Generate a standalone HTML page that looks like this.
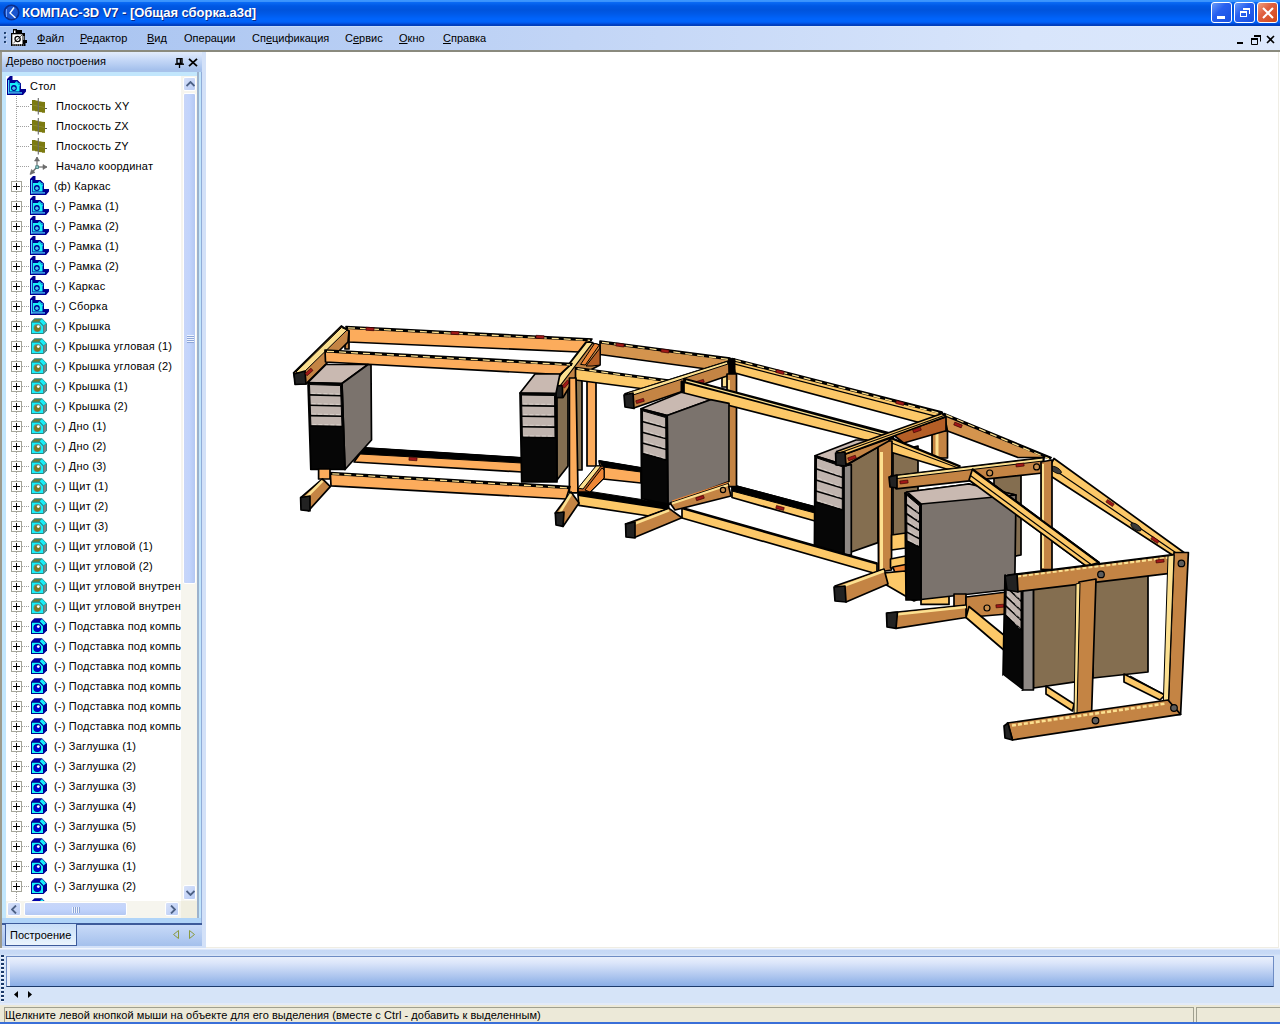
<!DOCTYPE html>
<html><head><meta charset="utf-8">
<style>
*{margin:0;padding:0;box-sizing:border-box}
html,body{width:1280px;height:1024px;overflow:hidden;background:#fff;font-family:"Liberation Sans",sans-serif;font-size:11px;color:#000}
.abs{position:absolute}
#title{left:0;top:0;width:1280px;height:26px;background:linear-gradient(#3c98ff 0px,#3a92fc 1.5px,#0a6af4 2.5px,#0058e4 6px,#0054dc 10px,#005ae8 14px,#0064fc 19px,#0062f8 22px,#0050e0 23.5px,#003cb8 25px,#0040c0 26px)}
#title .t{left:22px;top:5px;color:#fff;font-weight:bold;font-size:13px;letter-spacing:-0.05px;text-shadow:1px 1px 0 #0a2a8a}
.wb{top:2px;width:21px;height:21px;border:1px solid #fff;border-radius:3px;background:linear-gradient(135deg,#6a9cf8,#2860f0 40%,#1850e0)}
.wb.c{background:linear-gradient(135deg,#f0a080,#e06040 40%,#d04818)}
#menu{left:0;top:26px;width:1280px;height:24px;background:linear-gradient(90deg,#a6c2f0 0%,#c2d5f6 45%,#d8e5fb 80%,#dce8fc 100%)}
#menu span{position:absolute;top:6px;font-size:11px}
#sep{left:0;top:50px;width:1280px;height:2px;background:#8a8a7e}
#lp{left:0;top:52px;width:206px;height:896px;background:#d3e1f8}
#lpb{left:0;top:52px;width:2px;height:896px;background:#9c9a8c}
#ph{left:2px;top:52px;width:200px;height:18px;background:linear-gradient(#e2ecfc,#c8daf8 40%,#a4c0ec)}
#ph .t{left:4px;top:3px}
#phb{left:2px;top:70px;width:200px;height:2px;background:#a8c2ea}
#treeb{left:2px;top:72px;width:199px;height:852px;background:#c2e6fc}
#tree{left:6px;top:76px;width:175px;height:825px;background:#fff;overflow:hidden}
.row{position:absolute;left:0;height:20px;white-space:nowrap}
.tx{white-space:nowrap;letter-spacing:0.2px}
.dotv{position:absolute;border-left:1px dotted #a0a0a0}
.doth{position:absolute;border-top:1px dotted #a0a0a0}
.pb{position:absolute;width:11px;height:11px;border:1px solid #a5a59a;background:#fff}
.pb:before{content:"";position:absolute;left:1px;top:4px;width:7px;height:1px;background:#000}
.pb:after{content:"";position:absolute;left:4px;top:1px;width:1px;height:7px;background:#000}
#vs{left:181px;top:76px;width:16px;height:825px;background:#f6f5ee}
.sbtn{position:absolute;border:1px solid #fff;border-radius:2px;background:linear-gradient(135deg,#d8e2fa,#b8cbf4)}
#hs{left:6px;top:901px;width:191px;height:17px;background:#f6f5ee}
#tabbar{left:2px;top:924px;width:200px;height:22px;background:linear-gradient(#c8daf8,#a4c0ec);border-top:1px solid #3c5a9a}
#tab{left:5px;top:924px;width:72px;height:22px;background:linear-gradient(#c8def8,#eaf4fc);border:1px solid #3c5a9a;border-top:none}
#bot{left:0;top:948px;width:1280px;height:59px;background:#d6e4f8}
#status{left:0;top:1005px;width:1280px;height:17px;background:#ece9d8}
#taskb{left:0;top:1022px;width:1280px;height:2px;background:#3a6fd8}
</style></head><body>
<div id="title" class="abs">
  <svg class="abs" style="left:2px;top:3px" width="18" height="18" viewBox="0 0 18 18"><circle cx="9.5" cy="9.5" r="7.3" fill="#1a56d0" stroke="#0c2e8a" stroke-width="1.6"/><path d="M12 4.5 L8 10 L13.5 15" stroke="#f0f8ff" stroke-width="1.4" fill="none"/><path d="M4.5 6 L4.5 14" stroke="#6aa0ff" stroke-width="1"/></svg>
  <div class="abs t">КОМПАС-3D V7 - [Общая сборка.a3d]</div>
  <div class="abs wb" style="left:1211px"><div class="abs" style="left:5px;top:13px;width:8px;height:3px;background:#fff"></div></div>
  <div class="abs wb" style="left:1234px"><div class="abs" style="left:5px;top:8px;width:7px;height:6px;border:1px solid #fff;border-top-width:2px"></div><div class="abs" style="left:8px;top:5px;width:7px;height:6px;border-top:2px solid #fff;border-right:1px solid #fff"></div></div>
  <div class="abs wb c" style="left:1257px"><svg class="abs" style="left:3px;top:3px" width="14" height="14"><path d="M2 2L12 12M12 2L2 12" stroke="#fff" stroke-width="2"/></svg></div>
</div>
<div id="menu" class="abs">
  <svg class="abs" style="left:3px;top:5px" width="5" height="14"><rect x="1" y="1" width="2" height="2" fill="#1c3c6c"/><rect x="1" y="5.5" width="2" height="2" fill="#1c3c6c"/><rect x="1" y="10" width="2" height="2" fill="#1c3c6c"/><path d="M3.2 2.5v1.2M3.2 7v1.2M3.2 11.5v1.2" stroke="#fff" stroke-width="0.8"/></svg>
  <svg class="abs" style="left:10px;top:2px" width="18" height="19" viewBox="0 0 18 19"><path d="M1 5 L3 5 L3 1 L7 1 L7 2 L12 2 L12 5 L15 5 L15 12 L17 12 L17 15 L15.5 15 L15.5 18 L1 18 Z" fill="#000"/><rect x="2.3" y="6.3" width="10.2" height="9.8" fill="#fff"/><rect x="4" y="2.5" width="1.5" height="2.5" fill="#fff"/><circle cx="7.6" cy="11" r="2.6" fill="none" stroke="#000" stroke-width="1.3"/><path d="M3.5 15 L12.5 6.5" stroke="#000" stroke-width="0.7"/><rect x="13" y="8" width="1.4" height="4" fill="#888"/><path d="M2.5 17 H13.5" stroke="#fff" stroke-width="1.1" stroke-dasharray="1.1 1"/></svg>
  <span style="left:37px"><u>Ф</u>айл</span>
  <span style="left:80px"><u>Р</u>едактор</span>
  <span style="left:147px"><u>В</u>ид</span>
  <span style="left:184px">Операции</span>
  <span style="left:252px">Сп<u>е</u>цификация</span>
  <span style="left:345px">С<u>е</u>рвис</span>
  <span style="left:399px"><u>О</u>кно</span>
  <span style="left:443px"><u>С</u>правка</span>
  <div class="abs" style="left:1237px;top:16px;width:6px;height:2px;background:#000"></div>
  <svg class="abs" style="left:1251px;top:9px" width="10" height="10"><path d="M0.5 3.5h6v6h-6z M3.5 0.5h6v6" fill="none" stroke="#000"/><path d="M0 3h7v2H0z M3 0h7v2H3z" fill="#000"/></svg>
  <svg class="abs" style="left:1266px;top:9px" width="10" height="10"><path d="M1 1L8 8M8 1L1 8" stroke="#000" stroke-width="1.6"/></svg>
</div>
<div id="sep" class="abs"></div>
<div class="abs" style="left:0;top:26px;width:1280px;height:1px;background:linear-gradient(90deg,#b8d4fa,#d4e6fc 60%,#e4eefc)"></div>
<svg class="abs" style="left:0;top:0" width="1280" height="1024" viewBox="0 0 1280 1024"><polygon points="346.0,326.5 592.0,339.0 579.0,352.0 348.0,342.0" fill="#fcac5c" stroke="#000" stroke-width="1.7" stroke-linejoin="round"/>
<line x1="346.0" y1="327.8" x2="592.0" y2="340.3" stroke="#000" stroke-width="2.6" stroke-linecap="butt"/>
<line x1="348.0" y1="327.8" x2="590.0" y2="340.3" stroke="#fce090" stroke-width="1.3" stroke-linecap="butt" stroke-dasharray="7 5"/>
<polygon points="600.0,341.0 730.0,358.0 736.0,373.0 600.0,354.5" fill="#d4944e" stroke="#000" stroke-width="1.7" stroke-linejoin="round"/>
<line x1="600.0" y1="342.3" x2="730.0" y2="359.3" stroke="#000" stroke-width="2.6" stroke-linecap="butt"/>
<line x1="602.0" y1="342.3" x2="728.0" y2="359.3" stroke="#fce090" stroke-width="1.3" stroke-linecap="butt" stroke-dasharray="7 5"/>
<polygon points="732.0,358.5 942.0,412.0 947.0,430.0 735.0,373.0" fill="#fcc868" stroke="#000" stroke-width="1.7" stroke-linejoin="round"/>
<line x1="732.0" y1="359.8" x2="942.0" y2="413.3" stroke="#000" stroke-width="2.6" stroke-linecap="butt"/>
<line x1="734.0" y1="359.8" x2="940.0" y2="413.3" stroke="#fce090" stroke-width="1.3" stroke-linecap="butt" stroke-dasharray="7 5"/>
<line x1="733.0" y1="363.6" x2="943.8" y2="418.3" stroke="#000" stroke-width="1.2" stroke-linecap="butt"/>
<polygon points="944.0,413.5 1051.0,457.5 1018.0,457.5 947.5,431.0" fill="#d4944e" stroke="#000" stroke-width="1.7" stroke-linejoin="round"/>
<line x1="944.0" y1="414.8" x2="1051.0" y2="458.8" stroke="#000" stroke-width="2.6" stroke-linecap="butt"/>
<line x1="946.0" y1="414.8" x2="1049.0" y2="458.8" stroke="#fce090" stroke-width="1.3" stroke-linecap="butt" stroke-dasharray="7 5"/>
<polygon points="1054.0,458.5 1184.0,552.5 1174.0,556.0 1046.0,473.0" fill="#fcc868" stroke="#000" stroke-width="1.7" stroke-linejoin="round"/>
<line x1="1049.6" y1="466.5" x2="1178.5" y2="554.4" stroke="#000" stroke-width="1.2" stroke-linecap="butt"/>
<rect x="366" y="327.5" width="8" height="3" fill="#a01818" stroke="#300" stroke-width="0.6" transform="rotate(3 370 329)"/>
<rect x="451" y="331.5" width="8" height="3" fill="#a01818" stroke="#300" stroke-width="0.6" transform="rotate(3 455 333)"/>
<rect x="536" y="335.5" width="8" height="3" fill="#a01818" stroke="#300" stroke-width="0.6" transform="rotate(3 540 337)"/>
<rect x="616" y="343.5" width="8" height="3" fill="#a01818" stroke="#300" stroke-width="0.6" transform="rotate(8 620 345)"/>
<rect x="661" y="349.5" width="8" height="3" fill="#a01818" stroke="#300" stroke-width="0.6" transform="rotate(8 665 351)"/>
<rect x="776" y="370.5" width="8" height="3" fill="#a01818" stroke="#300" stroke-width="0.6" transform="rotate(15 780 372)"/>
<rect x="896" y="401.5" width="8" height="3" fill="#a01818" stroke="#300" stroke-width="0.6" transform="rotate(15 900 403)"/>
<rect x="954" y="423.5" width="8" height="3" fill="#a01818" stroke="#300" stroke-width="0.6" transform="rotate(22 958 425)"/>
<rect x="1106" y="501.5" width="8" height="3" fill="#a01818" stroke="#300" stroke-width="0.6" transform="rotate(35 1110 503)"/>
<rect x="1151" y="538.5" width="8" height="3" fill="#a01818" stroke="#300" stroke-width="0.6" transform="rotate(35 1155 540)"/>
<ellipse cx="1056" cy="470" rx="6" ry="2.6" fill="#3a3a3a" stroke="#000" stroke-width="0.8" transform="rotate(30 1056 470)"/>
<ellipse cx="1136" cy="527" rx="6" ry="2.6" fill="#3a3a3a" stroke="#000" stroke-width="0.8" transform="rotate(34 1136 527)"/>
<ellipse cx="1010" cy="497" rx="6" ry="2.6" fill="#3a3a3a" stroke="#000" stroke-width="0.8" transform="rotate(8 1010 497)"/>
<polygon points="364.0,448.0 522.0,458.0 522.0,472.0 354.0,462.0" fill="#fcac5c" stroke="#000" stroke-width="1.7" stroke-linejoin="round"/>
<polygon points="364.0,447.5 522.0,457.5 522.0,463.0 360.0,454.0" fill="#000" stroke="#000" stroke-width="1" stroke-linejoin="round"/>
<rect x="409" y="457.5" width="8" height="3" fill="#a01818" stroke="#300" stroke-width="0.6" transform="rotate(4 413 459)"/>
<polygon points="599.0,461.0 641.0,468.0 641.0,483.0 603.0,479.0" fill="#fcac5c" stroke="#000" stroke-width="1.7" stroke-linejoin="round"/>
<polygon points="599.0,460.5 641.0,467.5 641.0,472.0 603.0,467.0" fill="#000" stroke="#000" stroke-width="1" stroke-linejoin="round"/>
<polygon points="732.0,485.0 815.0,507.0 815.0,521.0 732.0,497.5" fill="#fcc868" stroke="#000" stroke-width="1.7" stroke-linejoin="round"/>
<polygon points="732.0,484.5 815.0,506.5 815.0,513.0 732.0,491.0" fill="#000" stroke="#000" stroke-width="1" stroke-linejoin="round"/>
<rect x="776" y="506.5" width="8" height="3" fill="#a01818" stroke="#300" stroke-width="0.6" transform="rotate(15 780 508)"/>
<polygon points="557.0,388.0 568.0,383.0 568.0,466.0 557.0,480.0" fill="#846e50" stroke="#000" stroke-width="1.7" stroke-linejoin="round"/>
<polygon points="576.0,378.0 582.0,378.0 582.0,470.0 576.0,470.0" fill="#8a7450" stroke="#000" stroke-width="1.7" stroke-linejoin="round"/>
<polygon points="846.0,465.5 878.0,447.0 878.0,542.6 851.3,552.0" fill="#846e50" stroke="#000" stroke-width="1.7" stroke-linejoin="round"/>
<polygon points="843.8,466.0 851.3,464.7 851.3,555.0 843.8,555.0" fill="#8e8884" stroke="#000" stroke-width="1.7" stroke-linejoin="round"/>
<polygon points="893.0,452.0 918.0,446.0 918.0,535.0 893.0,540.0" fill="#846e50" stroke="#000" stroke-width="1.7" stroke-linejoin="round"/>
<polygon points="994.0,478.0 1021.0,472.0 1021.0,555.0 994.0,560.0" fill="#846e50" stroke="#000" stroke-width="1.7" stroke-linejoin="round"/>
<polygon points="1033.4,589.0 1077.0,582.0 1077.0,681.6 1033.4,688.0" fill="#846e50" stroke="#000" stroke-width="1.7" stroke-linejoin="round"/>
<polygon points="1022.5,590.0 1033.4,589.0 1033.4,690.0 1022.5,690.0" fill="#8e8884" stroke="#000" stroke-width="1.7" stroke-linejoin="round"/>
<polygon points="1093.0,578.0 1148.0,570.0 1148.0,672.0 1093.0,678.0" fill="#846e50" stroke="#000" stroke-width="1.7" stroke-linejoin="round"/>
<polygon points="345.0,331.0 349.0,331.0 349.0,349.0 345.0,349.0" fill="#c48444" stroke="#000" stroke-width="1.7" stroke-linejoin="round"/>
<polygon points="587.0,380.0 596.0,380.0 596.0,466.0 587.0,466.0" fill="#fcac5c" stroke="#000" stroke-width="1.7" stroke-linejoin="round"/>
<polygon points="722.0,366.6 729.0,366.6 729.0,387.0 722.0,387.0" fill="#fce090" stroke="#000" stroke-width="1.7" stroke-linejoin="round"/>
<polygon points="932.0,431.0 947.5,431.0 947.5,458.0 932.0,458.0" fill="#c48444" stroke="#000" stroke-width="1.7" stroke-linejoin="round"/>
<line x1="937.0" y1="432.0" x2="937.0" y2="457.0" stroke="#fce090" stroke-width="3" stroke-linecap="butt"/>
<polygon points="293.6,372.8 341.3,326.0 349.0,331.0 348.0,342.0 306.0,383.8 296.0,384.0" fill="#c48444" stroke="#000" stroke-width="1.7" stroke-linejoin="round"/>
<polygon points="296.0,372.0 341.5,327.5 347.0,330.0 301.0,375.0" fill="#fce090" stroke="#000" stroke-width="1" stroke-linejoin="round"/>
<polygon points="294.0,374.0 305.0,371.0 306.0,384.0 295.0,384.5" fill="#222" stroke="#000" stroke-width="1.7" stroke-linejoin="round"/>
<rect x="305" y="370.5" width="8" height="3" fill="#a01818" stroke="#300" stroke-width="0.6" transform="rotate(-42 309 372)"/>
<polygon points="552.0,386.0 586.0,342.0 600.0,345.0 600.0,365.0 575.0,378.0 563.0,397.5 553.0,397.5" fill="#c48444" stroke="#000" stroke-width="1.7" stroke-linejoin="round"/>
<polygon points="553.0,385.0 586.5,342.3 593.0,342.3 560.0,386.0" fill="#fce090" stroke="#000" stroke-width="1.2" stroke-linejoin="round"/>
<polygon points="580.6,364.4 594.7,343.3 599.4,344.8 585.3,365.0" fill="#ee8636" stroke="#000" stroke-width="1" stroke-linejoin="round"/>
<polygon points="586.0,366.0 600.0,348.0 600.0,365.0 592.0,366.0" fill="#b45e26" stroke="#000" stroke-width="1" stroke-linejoin="round"/>
<polygon points="552.0,386.0 562.5,385.5 562.5,397.5 553.0,397.5" fill="#222" stroke="#000" stroke-width="1.7" stroke-linejoin="round"/>
<rect x="544" y="386.5" width="8" height="3" fill="#a01818" stroke="#300" stroke-width="0.6" transform="rotate(-50 548 388)"/>
<rect x="562" y="382.5" width="8" height="3" fill="#a01818" stroke="#300" stroke-width="0.6" transform="rotate(-50 566 384)"/>
<polygon points="325.0,350.0 572.0,363.5 560.0,374.5 325.5,362.0" fill="#fcac5c" stroke="#000" stroke-width="1.7" stroke-linejoin="round"/>
<line x1="325.0" y1="351.3" x2="572.0" y2="364.8" stroke="#000" stroke-width="2.6" stroke-linecap="butt"/>
<line x1="327.0" y1="351.3" x2="570.0" y2="364.8" stroke="#fce090" stroke-width="1.3" stroke-linecap="butt" stroke-dasharray="7 5"/>
<polygon points="575.5,367.5 683.0,382.0 683.0,394.0 575.5,380.0" fill="#fcc868" stroke="#000" stroke-width="1.7" stroke-linejoin="round"/>
<line x1="575.5" y1="368.6" x2="683.0" y2="383.1" stroke="#000" stroke-width="2.2" stroke-linecap="butt"/>
<line x1="577.5" y1="368.6" x2="681.0" y2="383.1" stroke="#fce090" stroke-width="1.3" stroke-linecap="butt" stroke-dasharray="7 5"/>
<polygon points="625.0,393.8 728.8,361.0 730.0,375.0 633.8,408.0" fill="#c48444" stroke="#000" stroke-width="1.7" stroke-linejoin="round"/>
<polygon points="627.0,393.0 727.0,361.5 728.0,364.0 630.0,396.0" fill="#fce090" stroke="#000" stroke-width="1" stroke-linejoin="round"/>
<polygon points="624.0,395.0 633.0,393.0 634.0,408.5 625.0,407.0" fill="#222" stroke="#000" stroke-width="1.7" stroke-linejoin="round"/>
<rect x="636" y="399.5" width="8" height="3" fill="#a01818" stroke="#300" stroke-width="0.6" transform="rotate(-17 640 401)"/>
<rect x="696" y="380.5" width="8" height="3" fill="#a01818" stroke="#300" stroke-width="0.6" transform="rotate(-17 700 382)"/>
<polygon points="681.0,381.0 686.0,381.0 686.0,392.5 681.0,392.5" fill="#000" stroke="#000" stroke-width="1" stroke-linejoin="round"/>
<polygon points="728.8,358.8 735.0,358.8 735.0,374.4 728.8,374.4" fill="#000" stroke="#000" stroke-width="1" stroke-linejoin="round"/>
<polygon points="727.0,374.0 736.5,374.0 736.5,486.6 727.0,486.6" fill="#c48444" stroke="#000" stroke-width="1.7" stroke-linejoin="round"/>
<line x1="729.0" y1="380.0" x2="729.0" y2="484.0" stroke="#fce090" stroke-width="2" stroke-linecap="butt"/>
<polygon points="684.0,378.5 889.0,432.8 885.0,445.0 684.0,394.0" fill="#fcc868" stroke="#000" stroke-width="1.7" stroke-linejoin="round"/>
<line x1="684.0" y1="380.8" x2="889.0" y2="435.1" stroke="#000" stroke-width="4.5" stroke-linecap="butt"/>
<line x1="686.0" y1="380.8" x2="887.0" y2="435.1" stroke="#fce090" stroke-width="1.2" stroke-linecap="butt"/>
<polygon points="887.0,436.0 960.0,466.0 953.0,471.0 887.0,451.0" fill="#fcc868" stroke="#000" stroke-width="1.7" stroke-linejoin="round"/>
<line x1="887.0" y1="436.8" x2="960.0" y2="466.8" stroke="#000" stroke-width="1.5" stroke-linecap="butt"/>
<line x1="887.0" y1="441.2" x2="957.5" y2="467.8" stroke="#000" stroke-width="1.2" stroke-linecap="butt"/>
<polygon points="308.0,382.5 326.0,364.5 368.0,364.5 342.0,383.5" fill="#c9b9b1" stroke="#000" stroke-width="1.7" stroke-linejoin="round"/>
<polygon points="342.0,383.5 368.0,364.5 371.0,365.0 371.5,440.0 345.0,469.5" fill="#7b736d" stroke="#000" stroke-width="1.7" stroke-linejoin="round"/>
<polygon points="308.0,382.5 342.0,383.5 345.0,469.5 310.8,469.5" fill="#060606" stroke="#000" stroke-width="1.7" stroke-linejoin="round"/>
<polygon points="309.5,384.5 340.5,385.5 342.0,426.5 310.9,426.0" fill="#c0b4ae" stroke="#000" stroke-width="1" stroke-linejoin="round"/>
<line x1="309.4" y1="394.9" x2="341.4" y2="395.8" stroke="#000" stroke-width="1.6" stroke-linecap="butt"/>
<line x1="311.4" y1="393.3" x2="339.4" y2="394.1" stroke="#e8e2dc" stroke-width="0.6" stroke-linecap="butt" stroke-dasharray="4 2"/>
<line x1="309.7" y1="405.2" x2="341.8" y2="406.0" stroke="#000" stroke-width="1.6" stroke-linecap="butt"/>
<line x1="311.7" y1="403.6" x2="339.8" y2="404.4" stroke="#e8e2dc" stroke-width="0.6" stroke-linecap="butt" stroke-dasharray="4 2"/>
<line x1="310.0" y1="415.6" x2="342.1" y2="416.2" stroke="#000" stroke-width="1.6" stroke-linecap="butt"/>
<line x1="312.0" y1="414.0" x2="340.1" y2="414.6" stroke="#e8e2dc" stroke-width="0.6" stroke-linecap="butt" stroke-dasharray="4 2"/>
<line x1="310.4" y1="426.0" x2="342.5" y2="426.5" stroke="#000" stroke-width="1.6" stroke-linecap="butt"/>
<line x1="312.4" y1="424.4" x2="340.5" y2="424.9" stroke="#e8e2dc" stroke-width="0.6" stroke-linecap="butt" stroke-dasharray="4 2"/>
<polygon points="520.0,393.0 535.0,374.0 560.0,374.0 556.0,393.5" fill="#c9b9b1" stroke="#000" stroke-width="1.7" stroke-linejoin="round"/>
<polygon points="520.0,393.0 556.0,393.5 557.0,481.9 521.7,481.9" fill="#060606" stroke="#000" stroke-width="1.7" stroke-linejoin="round"/>
<polygon points="521.5,395.0 554.5,395.5 555.0,437.7 522.4,437.4" fill="#c0b4ae" stroke="#000" stroke-width="1" stroke-linejoin="round"/>
<line x1="521.2" y1="405.6" x2="555.1" y2="406.1" stroke="#000" stroke-width="1.6" stroke-linecap="butt"/>
<line x1="523.2" y1="404.0" x2="553.1" y2="404.4" stroke="#e8e2dc" stroke-width="0.6" stroke-linecap="butt" stroke-dasharray="4 2"/>
<line x1="521.4" y1="416.2" x2="555.2" y2="416.6" stroke="#000" stroke-width="1.6" stroke-linecap="butt"/>
<line x1="523.4" y1="414.6" x2="553.2" y2="415.0" stroke="#e8e2dc" stroke-width="0.6" stroke-linecap="butt" stroke-dasharray="4 2"/>
<line x1="521.6" y1="426.8" x2="555.4" y2="427.1" stroke="#000" stroke-width="1.6" stroke-linecap="butt"/>
<line x1="523.6" y1="425.2" x2="553.4" y2="425.5" stroke="#e8e2dc" stroke-width="0.6" stroke-linecap="butt" stroke-dasharray="4 2"/>
<line x1="521.9" y1="437.4" x2="555.5" y2="437.7" stroke="#000" stroke-width="1.6" stroke-linecap="butt"/>
<line x1="523.9" y1="435.8" x2="553.5" y2="436.1" stroke="#e8e2dc" stroke-width="0.6" stroke-linecap="butt" stroke-dasharray="4 2"/>
<polygon points="641.0,408.8 681.3,392.3 710.6,399.7 667.2,415.5" fill="#c9b9b1" stroke="#000" stroke-width="1.7" stroke-linejoin="round"/>
<polygon points="667.2,415.5 710.6,399.7 729.0,403.3 729.0,481.5 667.9,504.7" fill="#7b736d" stroke="#000" stroke-width="1.7" stroke-linejoin="round"/>
<polygon points="641.0,408.8 667.2,415.5 667.9,504.7 641.6,498.5" fill="#060606" stroke="#000" stroke-width="1.7" stroke-linejoin="round"/>
<polygon points="642.5,410.8 665.7,417.5 666.0,460.1 642.8,453.6" fill="#c0b4ae" stroke="#000" stroke-width="1" stroke-linejoin="round"/>
<line x1="642.1" y1="421.5" x2="666.3" y2="428.1" stroke="#000" stroke-width="1.6" stroke-linecap="butt"/>
<line x1="644.1" y1="419.9" x2="664.3" y2="426.5" stroke="#e8e2dc" stroke-width="0.6" stroke-linecap="butt" stroke-dasharray="4 2"/>
<line x1="642.1" y1="432.2" x2="666.4" y2="438.8" stroke="#000" stroke-width="1.6" stroke-linecap="butt"/>
<line x1="644.1" y1="430.6" x2="664.4" y2="437.2" stroke="#e8e2dc" stroke-width="0.6" stroke-linecap="butt" stroke-dasharray="4 2"/>
<line x1="642.2" y1="442.9" x2="666.5" y2="449.5" stroke="#000" stroke-width="1.6" stroke-linecap="butt"/>
<line x1="644.2" y1="441.3" x2="664.5" y2="447.9" stroke="#e8e2dc" stroke-width="0.6" stroke-linecap="butt" stroke-dasharray="4 2"/>
<line x1="642.3" y1="453.6" x2="666.5" y2="460.1" stroke="#000" stroke-width="1.6" stroke-linecap="butt"/>
<line x1="644.3" y1="452.0" x2="664.5" y2="458.5" stroke="#e8e2dc" stroke-width="0.6" stroke-linecap="butt" stroke-dasharray="4 2"/>
<polygon points="815.0,455.8 856.0,440.0 867.0,440.0 843.8,464.7" fill="#c9b9b1" stroke="#000" stroke-width="1.7" stroke-linejoin="round"/>
<polygon points="815.0,455.8 843.8,464.7 843.8,555.0 814.4,548.0" fill="#060606" stroke="#000" stroke-width="1.7" stroke-linejoin="round"/>
<polygon points="816.5,457.8 842.3,466.7 842.3,509.9 816.2,501.9" fill="#c0b4ae" stroke="#000" stroke-width="1" stroke-linejoin="round"/>
<line x1="815.9" y1="468.8" x2="842.8" y2="477.5" stroke="#000" stroke-width="1.6" stroke-linecap="butt"/>
<line x1="817.9" y1="467.2" x2="840.8" y2="475.9" stroke="#e8e2dc" stroke-width="0.6" stroke-linecap="butt" stroke-dasharray="4 2"/>
<line x1="815.9" y1="479.9" x2="842.8" y2="488.3" stroke="#000" stroke-width="1.6" stroke-linecap="butt"/>
<line x1="817.9" y1="478.2" x2="840.8" y2="486.7" stroke="#e8e2dc" stroke-width="0.6" stroke-linecap="butt" stroke-dasharray="4 2"/>
<line x1="815.8" y1="490.9" x2="842.8" y2="499.1" stroke="#000" stroke-width="1.6" stroke-linecap="butt"/>
<line x1="817.8" y1="489.3" x2="840.8" y2="497.5" stroke="#e8e2dc" stroke-width="0.6" stroke-linecap="butt" stroke-dasharray="4 2"/>
<line x1="815.7" y1="501.9" x2="842.8" y2="509.9" stroke="#000" stroke-width="1.6" stroke-linecap="butt"/>
<line x1="817.7" y1="500.3" x2="840.8" y2="508.2" stroke="#e8e2dc" stroke-width="0.6" stroke-linecap="butt" stroke-dasharray="4 2"/>
<polygon points="878.0,441.0 892.0,441.0 891.5,570.0 878.5,572.0" fill="#c48444" stroke="#000" stroke-width="1.7" stroke-linejoin="round"/>
<line x1="881.5" y1="452.0" x2="881.5" y2="569.0" stroke="#fce090" stroke-width="3" stroke-linecap="butt"/>
<polygon points="893.5,435.0 946.0,417.0 946.0,430.8 903.7,443.0" fill="#b45e26" stroke="#000" stroke-width="1.7" stroke-linejoin="round"/>
<polygon points="840.0,456.0 893.5,437.0 888.0,441.5 846.7,464.5" fill="#c48444" stroke="#000" stroke-width="1.7" stroke-linejoin="round"/>
<polygon points="836.6,451.5 942.0,413.5 946.0,416.5 840.0,456.0" fill="#fcc868" stroke="#000" stroke-width="1.7" stroke-linejoin="round"/>
<line x1="838.0" y1="453.5" x2="944.0" y2="415.5" stroke="#000" stroke-width="1.2" stroke-linecap="butt"/>
<polygon points="835.6,453.0 845.0,452.0 846.0,466.0 836.0,465.0" fill="#222" stroke="#000" stroke-width="1.7" stroke-linejoin="round"/>
<rect x="848" y="456.5" width="8" height="3" fill="#a01818" stroke="#300" stroke-width="0.6" transform="rotate(-19 852 458)"/>
<rect x="913" y="428.5" width="8" height="3" fill="#a01818" stroke="#300" stroke-width="0.6" transform="rotate(-19 917 430)"/>
<polygon points="569.4,378.0 576.0,378.0 578.0,492.8 569.4,492.8" fill="#fcac5c" stroke="#000" stroke-width="1.7" stroke-linejoin="round"/>
<polygon points="330.3,472.5 570.0,486.6 566.0,499.0 331.0,485.8" fill="#fcac5c" stroke="#000" stroke-width="1.7" stroke-linejoin="round"/>
<line x1="330.3" y1="473.8" x2="570.0" y2="487.9" stroke="#000" stroke-width="2.6" stroke-linecap="butt"/>
<line x1="332.3" y1="473.8" x2="568.0" y2="487.9" stroke="#fce090" stroke-width="1.3" stroke-linecap="butt" stroke-dasharray="7 5"/>
<polygon points="578.8,489.7 669.0,503.8 669.0,508.4 578.0,494.4" fill="#000" stroke="#000" stroke-width="1" stroke-linejoin="round"/>
<polygon points="578.0,494.4 669.0,508.4 649.0,516.0 578.8,505.3" fill="#fcc868" stroke="#000" stroke-width="1.7" stroke-linejoin="round"/>
<line x1="578.0" y1="495.2" x2="669.0" y2="509.2" stroke="#000" stroke-width="1.6" stroke-linecap="butt"/>
<polygon points="682.0,507.6 877.0,563.0 877.0,574.0 682.0,518.0" fill="#fcc868" stroke="#000" stroke-width="1.7" stroke-linejoin="round"/>
<line x1="682.0" y1="508.5" x2="877.0" y2="563.9" stroke="#000" stroke-width="1.8" stroke-linecap="butt"/>
<polygon points="578.0,489.0 597.0,466.0 604.0,466.0 604.0,478.0 590.0,492.0 578.0,492.0" fill="#b45e26" stroke="#000" stroke-width="1.7" stroke-linejoin="round"/>
<polygon points="578.0,488.0 596.0,466.0 601.0,466.0 583.0,489.0" fill="#fce090" stroke="#000" stroke-width="1" stroke-linejoin="round"/>
<polygon points="585.0,490.0 602.0,468.0 604.0,470.0 604.0,478.0 590.0,492.0" fill="#ee8636" stroke="#000" stroke-width="1" stroke-linejoin="round"/>
<polygon points="670.0,503.0 728.0,483.6 731.0,496.0 675.0,510.0" fill="#c48444" stroke="#000" stroke-width="1.7" stroke-linejoin="round"/>
<line x1="672.0" y1="503.5" x2="728.0" y2="485.0" stroke="#fce090" stroke-width="2.2" stroke-linecap="butt"/>
<line x1="672.0" y1="501.0" x2="728.0" y2="482.5" stroke="#ee8636" stroke-width="1.2" stroke-linecap="butt"/>
<circle cx="723" cy="490" r="2.6" fill="#c89050" stroke="#000" stroke-width="1.2"/>
<rect x="696" y="496.5" width="8" height="3" fill="#a01818" stroke="#300" stroke-width="0.6" transform="rotate(-18 700 498)"/>
<polygon points="972.5,469.0 1099.0,562.4 1087.0,566.6 969.0,480.0" fill="#fcc868" stroke="#000" stroke-width="1.7" stroke-linejoin="round"/>
<line x1="972.5" y1="469.8" x2="1099.0" y2="563.1" stroke="#000" stroke-width="1.5" stroke-linecap="butt"/>
<line x1="970.4" y1="475.6" x2="1091.8" y2="564.9" stroke="#000" stroke-width="1.2" stroke-linecap="butt"/>
<polygon points="891.0,476.0 1044.0,457.5 1042.8,473.0 896.0,488.8" fill="#c48444" stroke="#000" stroke-width="1.7" stroke-linejoin="round"/>
<polygon points="892.0,476.0 1043.0,458.0 1043.0,461.0 893.0,479.0" fill="#fce090" stroke="#000" stroke-width="1" stroke-linejoin="round"/>
<polygon points="889.0,477.0 897.0,475.0 897.0,488.0 890.0,487.0" fill="#222" stroke="#000" stroke-width="1.7" stroke-linejoin="round"/>
<rect x="900" y="480.5" width="8" height="3" fill="#a01818" stroke="#300" stroke-width="0.6" transform="rotate(-7 904 482)"/>
<rect x="1016" y="463.5" width="8" height="3" fill="#a01818" stroke="#300" stroke-width="0.6" transform="rotate(-7 1020 465)"/>
<circle cx="989.7" cy="473" r="3" fill="#c89050" stroke="#000" stroke-width="1.2"/>
<circle cx="1036.6" cy="466.9" r="3" fill="#c89050" stroke="#000" stroke-width="1.2"/>
<polygon points="1041.0,462.0 1052.0,460.0 1052.0,569.7 1041.0,569.7" fill="#c48444" stroke="#000" stroke-width="1.7" stroke-linejoin="round"/>
<line x1="1043.0" y1="464.0" x2="1043.0" y2="568.0" stroke="#fce090" stroke-width="2" stroke-linecap="butt"/>
<polygon points="891.6,535.0 905.7,533.0 905.7,548.0 891.6,550.0" fill="#fcc868" stroke="#000" stroke-width="1.7" stroke-linejoin="round"/>
<polygon points="890.5,559.0 905.7,556.0 905.7,567.0 890.5,568.0" fill="#fcc868" stroke="#000" stroke-width="1.7" stroke-linejoin="round"/>
<polygon points="892.8,567.0 905.7,564.5 905.7,575.0 897.0,578.0" fill="#ee8636" stroke="#000" stroke-width="1.7" stroke-linejoin="round"/>
<polygon points="884.6,572.8 905.0,571.0 922.0,597.4 914.0,601.0 883.4,583.3" fill="#fcc868" stroke="#000" stroke-width="1.7" stroke-linejoin="round"/>
<polygon points="921.0,597.0 949.0,595.0 949.0,604.4 921.0,604.4" fill="#fcc868" stroke="#000" stroke-width="1.7" stroke-linejoin="round"/>
<polygon points="905.0,493.0 907.0,492.0 969.0,484.0 921.0,504.0" fill="#c9b9b1" stroke="#000" stroke-width="1.7" stroke-linejoin="round"/>
<polygon points="921.0,504.0 969.0,484.0 1016.0,495.0 1014.7,589.0 921.0,599.5" fill="#7b736d" stroke="#000" stroke-width="1.7" stroke-linejoin="round"/>
<polygon points="905.0,493.0 921.0,504.0 921.0,600.0 906.0,600.0" fill="#060606" stroke="#000" stroke-width="1.7" stroke-linejoin="round"/>
<polygon points="906.5,495.0 919.5,506.0 919.5,547.2 907.0,541.1" fill="#c0b4ae" stroke="#000" stroke-width="1" stroke-linejoin="round"/>
<line x1="906.1" y1="504.2" x2="920.0" y2="514.2" stroke="#000" stroke-width="1.6" stroke-linecap="butt"/>
<line x1="908.1" y1="502.6" x2="918.0" y2="512.6" stroke="#e8e2dc" stroke-width="0.6" stroke-linecap="butt" stroke-dasharray="4 2"/>
<line x1="906.2" y1="513.5" x2="920.0" y2="522.5" stroke="#000" stroke-width="1.6" stroke-linecap="butt"/>
<line x1="908.2" y1="511.9" x2="918.0" y2="520.9" stroke="#e8e2dc" stroke-width="0.6" stroke-linecap="butt" stroke-dasharray="4 2"/>
<line x1="906.3" y1="522.7" x2="920.0" y2="530.7" stroke="#000" stroke-width="1.6" stroke-linecap="butt"/>
<line x1="908.3" y1="521.1" x2="918.0" y2="529.1" stroke="#e8e2dc" stroke-width="0.6" stroke-linecap="butt" stroke-dasharray="4 2"/>
<line x1="906.4" y1="531.9" x2="920.0" y2="539.0" stroke="#000" stroke-width="1.6" stroke-linecap="butt"/>
<line x1="908.4" y1="530.3" x2="918.0" y2="537.4" stroke="#e8e2dc" stroke-width="0.6" stroke-linecap="butt" stroke-dasharray="4 2"/>
<line x1="906.5" y1="541.1" x2="920.0" y2="547.2" stroke="#000" stroke-width="1.6" stroke-linecap="butt"/>
<line x1="908.5" y1="539.5" x2="918.0" y2="545.6" stroke="#e8e2dc" stroke-width="0.6" stroke-linecap="butt" stroke-dasharray="4 2"/>
<polygon points="907.0,492.0 969.0,484.0 1016.0,495.0 921.0,504.0" fill="#c9b9b1" stroke="#000" stroke-width="1.7" stroke-linejoin="round"/>
<polygon points="972.5,469.0 1099.0,562.4 1087.0,566.6 969.0,480.0" fill="#fcc868" stroke="#000" stroke-width="1.7" stroke-linejoin="round"/>
<line x1="972.5" y1="469.8" x2="1099.0" y2="563.1" stroke="#000" stroke-width="1.5" stroke-linecap="butt"/>
<line x1="970.4" y1="475.6" x2="1091.8" y2="564.9" stroke="#000" stroke-width="1.2" stroke-linecap="butt"/>
<polygon points="318.6,469.0 330.0,469.0 330.0,479.0 318.6,479.0" fill="#fcac5c" stroke="#000" stroke-width="1.7" stroke-linejoin="round"/>
<polygon points="301.0,497.5 322.5,478.8 330.3,486.6 308.4,510.8" fill="#c48444" stroke="#000" stroke-width="1.7" stroke-linejoin="round"/>
<line x1="304.0" y1="499.5" x2="322.5" y2="480.8" stroke="#fce090" stroke-width="2.6" stroke-linecap="butt"/>
<polygon points="300.6,497.5 310.0,496.0 310.0,510.8 301.0,510.0" fill="#222" stroke="#000" stroke-width="1.7" stroke-linejoin="round"/>
<polygon points="555.3,513.0 571.0,492.0 579.0,503.0 563.0,526.4" fill="#c48444" stroke="#000" stroke-width="1.7" stroke-linejoin="round"/>
<line x1="558.3" y1="515.0" x2="571.0" y2="494.0" stroke="#fce090" stroke-width="2.6" stroke-linecap="butt"/>
<polygon points="555.3,513.0 564.0,512.0 563.0,526.4 556.0,525.0" fill="#222" stroke="#000" stroke-width="1.7" stroke-linejoin="round"/>
<polygon points="625.6,524.0 669.0,508.4 681.9,517.8 635.0,537.3" fill="#c48444" stroke="#000" stroke-width="1.7" stroke-linejoin="round"/>
<line x1="628.6" y1="526.0" x2="669.0" y2="510.4" stroke="#fce090" stroke-width="2.6" stroke-linecap="butt"/>
<polygon points="625.6,524.0 635.0,522.0 635.0,538.0 626.0,537.0" fill="#222" stroke="#000" stroke-width="1.7" stroke-linejoin="round"/>
<polygon points="835.0,586.0 884.0,569.0 888.0,584.0 846.0,602.0" fill="#c48444" stroke="#000" stroke-width="1.7" stroke-linejoin="round"/>
<line x1="838.0" y1="588.0" x2="884.0" y2="571.0" stroke="#fce090" stroke-width="2.6" stroke-linecap="butt"/>
<polygon points="834.0,587.0 845.0,586.0 846.0,602.0 835.0,601.0" fill="#222" stroke="#000" stroke-width="1.7" stroke-linejoin="round"/>
<polygon points="954.0,594.0 966.0,594.0 966.0,606.5 954.0,606.5" fill="#c48444" stroke="#000" stroke-width="1.7" stroke-linejoin="round"/>
<polygon points="966.0,597.0 1007.0,592.0 1007.0,614.0 966.0,617.5" fill="#c48444" stroke="#000" stroke-width="1.7" stroke-linejoin="round"/>
<circle cx="987" cy="608" r="3" fill="#c89050" stroke="#000" stroke-width="1.2"/>
<rect x="996" y="604.5" width="8" height="3" fill="#a01818" stroke="#300" stroke-width="0.6" transform="rotate(-5 1000 606)"/>
<polygon points="969.0,606.5 1005.0,636.0 1003.8,650.0 966.0,617.5" fill="#fcc868" stroke="#000" stroke-width="1.7" stroke-linejoin="round"/>
<polygon points="888.0,613.0 966.0,605.0 966.0,617.5 896.0,628.4" fill="#c48444" stroke="#000" stroke-width="1.7" stroke-linejoin="round"/>
<line x1="891.0" y1="615.0" x2="966.0" y2="607.0" stroke="#fce090" stroke-width="2.6" stroke-linecap="butt"/>
<polygon points="886.5,613.0 897.5,612.0 896.0,628.4 887.0,627.0" fill="#222" stroke="#000" stroke-width="1.7" stroke-linejoin="round"/>
<polygon points="1005.0,575.0 1022.5,590.0 1022.5,690.0 1003.0,675.0" fill="#060606" stroke="#000" stroke-width="1.7" stroke-linejoin="round"/>
<polygon points="1006.5,577.0 1021.0,592.0 1021.0,630.0 1005.7,615.0" fill="#c0b4ae" stroke="#000" stroke-width="1" stroke-linejoin="round"/>
<line x1="1005.8" y1="586.5" x2="1021.5" y2="601.5" stroke="#000" stroke-width="1.6" stroke-linecap="butt"/>
<line x1="1007.8" y1="584.9" x2="1019.5" y2="599.9" stroke="#e8e2dc" stroke-width="0.6" stroke-linecap="butt" stroke-dasharray="4 2"/>
<line x1="1005.6" y1="596.0" x2="1021.5" y2="611.0" stroke="#000" stroke-width="1.6" stroke-linecap="butt"/>
<line x1="1007.6" y1="594.4" x2="1019.5" y2="609.4" stroke="#e8e2dc" stroke-width="0.6" stroke-linecap="butt" stroke-dasharray="4 2"/>
<line x1="1005.4" y1="605.5" x2="1021.5" y2="620.5" stroke="#000" stroke-width="1.6" stroke-linecap="butt"/>
<line x1="1007.4" y1="603.9" x2="1019.5" y2="618.9" stroke="#e8e2dc" stroke-width="0.6" stroke-linecap="butt" stroke-dasharray="4 2"/>
<line x1="1005.2" y1="615.0" x2="1021.5" y2="630.0" stroke="#000" stroke-width="1.6" stroke-linecap="butt"/>
<line x1="1007.2" y1="613.4" x2="1019.5" y2="628.4" stroke="#e8e2dc" stroke-width="0.6" stroke-linecap="butt" stroke-dasharray="4 2"/>
<polygon points="1003.0,675.0 1022.5,690.0 1022.5,690.0 1003.0,690.0" fill="#fff" stroke="#fff" stroke-width="0" stroke-linejoin="round"/>
<polygon points="1046.0,686.0 1074.0,704.0 1072.5,711.0 1046.0,694.0" fill="#fcc868" stroke="#000" stroke-width="1.7" stroke-linejoin="round"/>
<polygon points="1124.0,674.0 1165.0,695.0 1160.0,700.0 1124.0,682.0" fill="#fcc868" stroke="#000" stroke-width="1.7" stroke-linejoin="round"/>
<line x1="1130.0" y1="676.0" x2="1163.0" y2="694.0" stroke="#000" stroke-width="1.2" stroke-linecap="butt"/>
<polygon points="1008.0,575.0 1177.0,554.0 1174.0,572.8 1017.5,591.6" fill="#c48444" stroke="#000" stroke-width="1.7" stroke-linejoin="round"/>
<line x1="1011.0" y1="577.0" x2="1175.0" y2="556.5" stroke="#fce090" stroke-width="2.6" stroke-linecap="butt" stroke-dasharray="4 2"/>
<line x1="1011.0" y1="575.5" x2="1175.0" y2="555.0" stroke="#000" stroke-width="1.2" stroke-linecap="butt"/>
<polygon points="1005.0,576.0 1017.0,574.0 1018.0,592.0 1007.0,590.0" fill="#222" stroke="#000" stroke-width="1.7" stroke-linejoin="round"/>
<rect x="1156" y="559.5" width="8" height="3" fill="#a01818" stroke="#300" stroke-width="0.6" transform="rotate(-7 1160 561)"/>
<polygon points="1079.0,582.0 1096.0,579.0 1091.5,716.0 1076.0,716.0" fill="#c48444" stroke="#000" stroke-width="1.7" stroke-linejoin="round"/>
<polygon points="1076.0,584.0 1080.0,583.0 1077.0,714.0 1074.0,714.0" fill="#fce090" stroke="#000" stroke-width="1" stroke-linejoin="round"/>
<polygon points="1174.0,552.5 1188.4,552.5 1180.6,714.4 1168.0,714.4" fill="#c48444" stroke="#000" stroke-width="1.7" stroke-linejoin="round"/>
<polygon points="1168.0,556.0 1174.0,555.0 1168.0,712.0 1163.0,712.0" fill="#fce090" stroke="#000" stroke-width="1" stroke-linejoin="round"/>
<polygon points="1007.5,723.0 1168.0,700.0 1180.6,714.4 1012.5,740.0" fill="#c48444" stroke="#000" stroke-width="1.7" stroke-linejoin="round"/>
<line x1="1012.0" y1="725.5" x2="1166.0" y2="703.5" stroke="#fce090" stroke-width="2.6" stroke-linecap="butt" stroke-dasharray="4 2"/>
<polygon points="1004.0,726.0 1008.0,723.0 1012.5,740.0 1005.0,738.0" fill="#222" stroke="#000" stroke-width="1.7" stroke-linejoin="round"/>
<circle cx="1101" cy="574.4" r="3.3" fill="#5c5c5c" stroke="#000" stroke-width="1.2"/>
<circle cx="1181.4" cy="563.4" r="3.3" fill="#5c5c5c" stroke="#000" stroke-width="1.2"/>
<circle cx="1174" cy="708" r="3.3" fill="#5c5c5c" stroke="#000" stroke-width="1.2"/>
<circle cx="1095.5" cy="720.6" r="3.3" fill="#5c5c5c" stroke="#000" stroke-width="1.2"/></svg>
<div id="lp" class="abs"></div>
<div id="lpb" class="abs"></div>
<div id="ph" class="abs"><div class="abs t">Дерево построения</div>
<svg class="abs" style="left:173px;top:6px" width="9" height="10"><path d="M2 0.5h5v5H2z" fill="none" stroke="#000" stroke-width="1.4"/><path d="M5.5 0.5v5" stroke="#000" stroke-width="1.5"/><path d="M0 6.2h9" stroke="#000" stroke-width="1.4"/><path d="M4.5 6v4" stroke="#000" stroke-width="1.3"/></svg>
<svg class="abs" style="left:186px;top:6px" width="10" height="9"><path d="M1 0.8L9 8.2M9 0.8L1 8.2" stroke="#000" stroke-width="1.8"/></svg></div>
<div id="phb" class="abs"></div>
<div id="treeb" class="abs"></div>
<div id="tree" class="abs">
<div class="dotv" style="left:10px;top:20px;height:809px"></div>
<svg class="abs" style="left:1px;top:0px" width="20" height="19" viewBox="0 0 20 19">
<path d="M0 3 L3 0 L5.5 0 L5.5 4 L10.5 4 L14 7.5 L14 13 L19 13 L19 15.5 L16 19 L0 19Z" fill="#000090"/>
<rect x="1" y="4" width="1.3" height="13.5" fill="#50d8ff"/><rect x="1" y="16.3" width="14" height="1.2" fill="#50d8ff"/>
<path d="M3 7 L12.5 7 L12.5 15.5 L3 15.5Z" fill="#18f0f8"/>
<path d="M9.5 5 L13.5 9 L12 10.5 L8 6.5Z" fill="#18f0f8"/>
<path d="M9 5.5 L13 9.5" stroke="#000090" stroke-width="0.9" stroke-dasharray="1 0.8"/>
<circle cx="6.9" cy="12" r="2.9" fill="#000090"/><circle cx="6.9" cy="12.3" r="1.7" fill="#40c8f0"/>
</svg>
<div class="abs tx" style="left:24px;top:4px">Стол</div>
<div class="doth" style="left:11px;top:30px;width:12px"></div>
<svg class="abs" style="left:24px;top:22px" width="17" height="17" viewBox="0 0 17 17">
<path d="M2 2 L5.5 2 L5.5 2.6 L8.3 2.8 L8.3 3.3 L11.5 3.4 L11.5 3.8 L15 3.9 L15 14.7 L12 14.7 L12 14.2 L8.3 14 L8.3 13.4 L5 13.2 L5 12.7 L2 12.7Z" fill="#7c7a10"/>
<path d="M2.5 7 L14.5 9.5" stroke="#a0a060" stroke-width="0.6" opacity="0.7"/>
<path d="M8.3 0 L8.3 16.6" stroke="#6a6a6a" stroke-width="1.1"/>
<path d="M0 6.5 L2 6.5 M15 10.5 L17 10.5" stroke="#5a5a5a" stroke-width="1.1"/>
</svg>
<div class="abs tx" style="left:50px;top:24px">Плоскость XY</div>
<div class="doth" style="left:11px;top:50px;width:12px"></div>
<svg class="abs" style="left:24px;top:42px" width="17" height="17" viewBox="0 0 17 17">
<path d="M2 2 L5.5 2 L5.5 2.6 L8.3 2.8 L8.3 3.3 L11.5 3.4 L11.5 3.8 L15 3.9 L15 14.7 L12 14.7 L12 14.2 L8.3 14 L8.3 13.4 L5 13.2 L5 12.7 L2 12.7Z" fill="#7c7a10"/>
<path d="M2.5 7 L14.5 9.5" stroke="#a0a060" stroke-width="0.6" opacity="0.7"/>
<path d="M8.3 0 L8.3 16.6" stroke="#6a6a6a" stroke-width="1.1"/>
<path d="M0 6.5 L2 6.5 M15 10.5 L17 10.5" stroke="#5a5a5a" stroke-width="1.1"/>
</svg>
<div class="abs tx" style="left:50px;top:44px">Плоскость ZX</div>
<div class="doth" style="left:11px;top:70px;width:12px"></div>
<svg class="abs" style="left:24px;top:62px" width="17" height="17" viewBox="0 0 17 17">
<path d="M2 2 L5.5 2 L5.5 2.6 L8.3 2.8 L8.3 3.3 L11.5 3.4 L11.5 3.8 L15 3.9 L15 14.7 L12 14.7 L12 14.2 L8.3 14 L8.3 13.4 L5 13.2 L5 12.7 L2 12.7Z" fill="#7c7a10"/>
<path d="M2.5 7 L14.5 9.5" stroke="#a0a060" stroke-width="0.6" opacity="0.7"/>
<path d="M8.3 0 L8.3 16.6" stroke="#6a6a6a" stroke-width="1.1"/>
<path d="M0 6.5 L2 6.5 M15 10.5 L17 10.5" stroke="#5a5a5a" stroke-width="1.1"/>
</svg>
<div class="abs tx" style="left:50px;top:64px">Плоскость ZY</div>
<div class="doth" style="left:11px;top:90px;width:12px"></div>
<svg class="abs" style="left:23px;top:80px" width="20" height="20" viewBox="0 0 20 20">
<g stroke="#6c6c6c" fill="#6c6c6c">
<path d="M8 11 L8 1" stroke-width="1.2"/><path d="M5.5 5 L8 1 L10.5 5Z" stroke-width="0.6"/>
<path d="M8 11 L18 11" stroke-width="1.2"/><path d="M14 8.5 L18 11 L14 13.5Z" stroke-width="0.6"/>
<path d="M8 11 L1.5 18" stroke-width="1.4"/><path d="M1 18.5 L2.5 13.5 L6 16.5Z" stroke-width="0.6"/>
</g><rect x="6.8" y="9.8" width="2.6" height="2.6" fill="#9ad0d0" stroke="#3a7a7a" stroke-width="0.8"/>
</svg>
<div class="abs tx" style="left:50px;top:84px">Начало координат</div>
<div class="doth" style="left:16px;top:110px;width:7px"></div>
<div class="pb" style="left:5px;top:105px"></div>
<svg class="abs" style="left:24px;top:100px" width="20" height="19" viewBox="0 0 20 19">
<path d="M0 3 L3 0 L5.5 0 L5.5 4 L10.5 4 L14 7.5 L14 13 L19 13 L19 15.5 L16 19 L0 19Z" fill="#000090"/>
<rect x="1" y="4" width="1.3" height="13.5" fill="#50d8ff"/><rect x="1" y="16.3" width="14" height="1.2" fill="#50d8ff"/>
<path d="M3 7 L12.5 7 L12.5 15.5 L3 15.5Z" fill="#18f0f8"/>
<path d="M9.5 5 L13.5 9 L12 10.5 L8 6.5Z" fill="#18f0f8"/>
<path d="M9 5.5 L13 9.5" stroke="#000090" stroke-width="0.9" stroke-dasharray="1 0.8"/>
<circle cx="6.9" cy="12" r="2.9" fill="#000090"/><circle cx="6.9" cy="12.3" r="1.7" fill="#40c8f0"/>
</svg>
<div class="abs tx" style="left:48px;top:104px">(ф) Каркас</div>
<div class="doth" style="left:16px;top:130px;width:7px"></div>
<div class="pb" style="left:5px;top:125px"></div>
<svg class="abs" style="left:24px;top:120px" width="20" height="19" viewBox="0 0 20 19">
<path d="M0 3 L3 0 L5.5 0 L5.5 4 L10.5 4 L14 7.5 L14 13 L19 13 L19 15.5 L16 19 L0 19Z" fill="#000090"/>
<rect x="1" y="4" width="1.3" height="13.5" fill="#50d8ff"/><rect x="1" y="16.3" width="14" height="1.2" fill="#50d8ff"/>
<path d="M3 7 L12.5 7 L12.5 15.5 L3 15.5Z" fill="#18f0f8"/>
<path d="M9.5 5 L13.5 9 L12 10.5 L8 6.5Z" fill="#18f0f8"/>
<path d="M9 5.5 L13 9.5" stroke="#000090" stroke-width="0.9" stroke-dasharray="1 0.8"/>
<circle cx="6.9" cy="12" r="2.9" fill="#000090"/><circle cx="6.9" cy="12.3" r="1.7" fill="#40c8f0"/>
</svg>
<div class="abs tx" style="left:48px;top:124px">(-) Рамка (1)</div>
<div class="doth" style="left:16px;top:150px;width:7px"></div>
<div class="pb" style="left:5px;top:145px"></div>
<svg class="abs" style="left:24px;top:140px" width="20" height="19" viewBox="0 0 20 19">
<path d="M0 3 L3 0 L5.5 0 L5.5 4 L10.5 4 L14 7.5 L14 13 L19 13 L19 15.5 L16 19 L0 19Z" fill="#000090"/>
<rect x="1" y="4" width="1.3" height="13.5" fill="#50d8ff"/><rect x="1" y="16.3" width="14" height="1.2" fill="#50d8ff"/>
<path d="M3 7 L12.5 7 L12.5 15.5 L3 15.5Z" fill="#18f0f8"/>
<path d="M9.5 5 L13.5 9 L12 10.5 L8 6.5Z" fill="#18f0f8"/>
<path d="M9 5.5 L13 9.5" stroke="#000090" stroke-width="0.9" stroke-dasharray="1 0.8"/>
<circle cx="6.9" cy="12" r="2.9" fill="#000090"/><circle cx="6.9" cy="12.3" r="1.7" fill="#40c8f0"/>
</svg>
<div class="abs tx" style="left:48px;top:144px">(-) Рамка (2)</div>
<div class="doth" style="left:16px;top:170px;width:7px"></div>
<div class="pb" style="left:5px;top:165px"></div>
<svg class="abs" style="left:24px;top:160px" width="20" height="19" viewBox="0 0 20 19">
<path d="M0 3 L3 0 L5.5 0 L5.5 4 L10.5 4 L14 7.5 L14 13 L19 13 L19 15.5 L16 19 L0 19Z" fill="#000090"/>
<rect x="1" y="4" width="1.3" height="13.5" fill="#50d8ff"/><rect x="1" y="16.3" width="14" height="1.2" fill="#50d8ff"/>
<path d="M3 7 L12.5 7 L12.5 15.5 L3 15.5Z" fill="#18f0f8"/>
<path d="M9.5 5 L13.5 9 L12 10.5 L8 6.5Z" fill="#18f0f8"/>
<path d="M9 5.5 L13 9.5" stroke="#000090" stroke-width="0.9" stroke-dasharray="1 0.8"/>
<circle cx="6.9" cy="12" r="2.9" fill="#000090"/><circle cx="6.9" cy="12.3" r="1.7" fill="#40c8f0"/>
</svg>
<div class="abs tx" style="left:48px;top:164px">(-) Рамка (1)</div>
<div class="doth" style="left:16px;top:190px;width:7px"></div>
<div class="pb" style="left:5px;top:185px"></div>
<svg class="abs" style="left:24px;top:180px" width="20" height="19" viewBox="0 0 20 19">
<path d="M0 3 L3 0 L5.5 0 L5.5 4 L10.5 4 L14 7.5 L14 13 L19 13 L19 15.5 L16 19 L0 19Z" fill="#000090"/>
<rect x="1" y="4" width="1.3" height="13.5" fill="#50d8ff"/><rect x="1" y="16.3" width="14" height="1.2" fill="#50d8ff"/>
<path d="M3 7 L12.5 7 L12.5 15.5 L3 15.5Z" fill="#18f0f8"/>
<path d="M9.5 5 L13.5 9 L12 10.5 L8 6.5Z" fill="#18f0f8"/>
<path d="M9 5.5 L13 9.5" stroke="#000090" stroke-width="0.9" stroke-dasharray="1 0.8"/>
<circle cx="6.9" cy="12" r="2.9" fill="#000090"/><circle cx="6.9" cy="12.3" r="1.7" fill="#40c8f0"/>
</svg>
<div class="abs tx" style="left:48px;top:184px">(-) Рамка (2)</div>
<div class="doth" style="left:16px;top:210px;width:7px"></div>
<div class="pb" style="left:5px;top:205px"></div>
<svg class="abs" style="left:24px;top:200px" width="20" height="19" viewBox="0 0 20 19">
<path d="M0 3 L3 0 L5.5 0 L5.5 4 L10.5 4 L14 7.5 L14 13 L19 13 L19 15.5 L16 19 L0 19Z" fill="#000090"/>
<rect x="1" y="4" width="1.3" height="13.5" fill="#50d8ff"/><rect x="1" y="16.3" width="14" height="1.2" fill="#50d8ff"/>
<path d="M3 7 L12.5 7 L12.5 15.5 L3 15.5Z" fill="#18f0f8"/>
<path d="M9.5 5 L13.5 9 L12 10.5 L8 6.5Z" fill="#18f0f8"/>
<path d="M9 5.5 L13 9.5" stroke="#000090" stroke-width="0.9" stroke-dasharray="1 0.8"/>
<circle cx="6.9" cy="12" r="2.9" fill="#000090"/><circle cx="6.9" cy="12.3" r="1.7" fill="#40c8f0"/>
</svg>
<div class="abs tx" style="left:48px;top:204px">(-) Каркас</div>
<div class="doth" style="left:16px;top:230px;width:7px"></div>
<div class="pb" style="left:5px;top:225px"></div>
<svg class="abs" style="left:24px;top:220px" width="20" height="19" viewBox="0 0 20 19">
<path d="M0 3 L3 0 L5.5 0 L5.5 4 L10.5 4 L14 7.5 L14 13 L19 13 L19 15.5 L16 19 L0 19Z" fill="#000090"/>
<rect x="1" y="4" width="1.3" height="13.5" fill="#50d8ff"/><rect x="1" y="16.3" width="14" height="1.2" fill="#50d8ff"/>
<path d="M3 7 L12.5 7 L12.5 15.5 L3 15.5Z" fill="#18f0f8"/>
<path d="M9.5 5 L13.5 9 L12 10.5 L8 6.5Z" fill="#18f0f8"/>
<path d="M9 5.5 L13 9.5" stroke="#000090" stroke-width="0.9" stroke-dasharray="1 0.8"/>
<circle cx="6.9" cy="12" r="2.9" fill="#000090"/><circle cx="6.9" cy="12.3" r="1.7" fill="#40c8f0"/>
</svg>
<div class="abs tx" style="left:48px;top:224px">(-) Сборка</div>
<div class="doth" style="left:16px;top:250px;width:7px"></div>
<div class="pb" style="left:5px;top:245px"></div>
<svg class="abs" style="left:25px;top:242px" width="16" height="16" viewBox="0 0 16 16">
<path d="M0 3.7 L3.5 0.3 L11 0.3 L16 5.5 L16 12.5 L12.5 16 L0 16Z" fill="#2a8a8a"/>
<path d="M1.2 3.6 L4 1.2 L10.3 1.2 L7.6 3.6Z" fill="#807828"/>
<path d="M12.6 8 L15.2 5.6 L15.2 12.3 L12.6 15Z" fill="#808488"/>
<path d="M1 4.7 L8.5 4.7 L12 8.2 L12 15 L1 15Z" fill="#18f0f8"/>
<path d="M8.7 3.3 L11 1 L15 5.2 L12.6 7.5Z" fill="#18f0f8"/>
<path d="M8.3 3.6 L12.5 7.8" stroke="#2a8a8a" stroke-width="0.9" stroke-dasharray="1 0.9"/>
<circle cx="6.3" cy="10" r="3.9" fill="#609090"/><circle cx="6.3" cy="10.3" r="3.1" fill="#807820"/>
<circle cx="7.3" cy="8.6" r="1.4" fill="#fff"/>
</svg>
<div class="abs tx" style="left:48px;top:244px">(-) Крышка</div>
<div class="doth" style="left:16px;top:270px;width:7px"></div>
<div class="pb" style="left:5px;top:265px"></div>
<svg class="abs" style="left:25px;top:262px" width="16" height="16" viewBox="0 0 16 16">
<path d="M0 3.7 L3.5 0.3 L11 0.3 L16 5.5 L16 12.5 L12.5 16 L0 16Z" fill="#2a8a8a"/>
<path d="M1.2 3.6 L4 1.2 L10.3 1.2 L7.6 3.6Z" fill="#807828"/>
<path d="M12.6 8 L15.2 5.6 L15.2 12.3 L12.6 15Z" fill="#808488"/>
<path d="M1 4.7 L8.5 4.7 L12 8.2 L12 15 L1 15Z" fill="#18f0f8"/>
<path d="M8.7 3.3 L11 1 L15 5.2 L12.6 7.5Z" fill="#18f0f8"/>
<path d="M8.3 3.6 L12.5 7.8" stroke="#2a8a8a" stroke-width="0.9" stroke-dasharray="1 0.9"/>
<circle cx="6.3" cy="10" r="3.9" fill="#609090"/><circle cx="6.3" cy="10.3" r="3.1" fill="#807820"/>
<circle cx="7.3" cy="8.6" r="1.4" fill="#fff"/>
</svg>
<div class="abs tx" style="left:48px;top:264px">(-) Крышка угловая (1)</div>
<div class="doth" style="left:16px;top:290px;width:7px"></div>
<div class="pb" style="left:5px;top:285px"></div>
<svg class="abs" style="left:25px;top:282px" width="16" height="16" viewBox="0 0 16 16">
<path d="M0 3.7 L3.5 0.3 L11 0.3 L16 5.5 L16 12.5 L12.5 16 L0 16Z" fill="#2a8a8a"/>
<path d="M1.2 3.6 L4 1.2 L10.3 1.2 L7.6 3.6Z" fill="#807828"/>
<path d="M12.6 8 L15.2 5.6 L15.2 12.3 L12.6 15Z" fill="#808488"/>
<path d="M1 4.7 L8.5 4.7 L12 8.2 L12 15 L1 15Z" fill="#18f0f8"/>
<path d="M8.7 3.3 L11 1 L15 5.2 L12.6 7.5Z" fill="#18f0f8"/>
<path d="M8.3 3.6 L12.5 7.8" stroke="#2a8a8a" stroke-width="0.9" stroke-dasharray="1 0.9"/>
<circle cx="6.3" cy="10" r="3.9" fill="#609090"/><circle cx="6.3" cy="10.3" r="3.1" fill="#807820"/>
<circle cx="7.3" cy="8.6" r="1.4" fill="#fff"/>
</svg>
<div class="abs tx" style="left:48px;top:284px">(-) Крышка угловая (2)</div>
<div class="doth" style="left:16px;top:310px;width:7px"></div>
<div class="pb" style="left:5px;top:305px"></div>
<svg class="abs" style="left:25px;top:302px" width="16" height="16" viewBox="0 0 16 16">
<path d="M0 3.7 L3.5 0.3 L11 0.3 L16 5.5 L16 12.5 L12.5 16 L0 16Z" fill="#2a8a8a"/>
<path d="M1.2 3.6 L4 1.2 L10.3 1.2 L7.6 3.6Z" fill="#807828"/>
<path d="M12.6 8 L15.2 5.6 L15.2 12.3 L12.6 15Z" fill="#808488"/>
<path d="M1 4.7 L8.5 4.7 L12 8.2 L12 15 L1 15Z" fill="#18f0f8"/>
<path d="M8.7 3.3 L11 1 L15 5.2 L12.6 7.5Z" fill="#18f0f8"/>
<path d="M8.3 3.6 L12.5 7.8" stroke="#2a8a8a" stroke-width="0.9" stroke-dasharray="1 0.9"/>
<circle cx="6.3" cy="10" r="3.9" fill="#609090"/><circle cx="6.3" cy="10.3" r="3.1" fill="#807820"/>
<circle cx="7.3" cy="8.6" r="1.4" fill="#fff"/>
</svg>
<div class="abs tx" style="left:48px;top:304px">(-) Крышка (1)</div>
<div class="doth" style="left:16px;top:330px;width:7px"></div>
<div class="pb" style="left:5px;top:325px"></div>
<svg class="abs" style="left:25px;top:322px" width="16" height="16" viewBox="0 0 16 16">
<path d="M0 3.7 L3.5 0.3 L11 0.3 L16 5.5 L16 12.5 L12.5 16 L0 16Z" fill="#2a8a8a"/>
<path d="M1.2 3.6 L4 1.2 L10.3 1.2 L7.6 3.6Z" fill="#807828"/>
<path d="M12.6 8 L15.2 5.6 L15.2 12.3 L12.6 15Z" fill="#808488"/>
<path d="M1 4.7 L8.5 4.7 L12 8.2 L12 15 L1 15Z" fill="#18f0f8"/>
<path d="M8.7 3.3 L11 1 L15 5.2 L12.6 7.5Z" fill="#18f0f8"/>
<path d="M8.3 3.6 L12.5 7.8" stroke="#2a8a8a" stroke-width="0.9" stroke-dasharray="1 0.9"/>
<circle cx="6.3" cy="10" r="3.9" fill="#609090"/><circle cx="6.3" cy="10.3" r="3.1" fill="#807820"/>
<circle cx="7.3" cy="8.6" r="1.4" fill="#fff"/>
</svg>
<div class="abs tx" style="left:48px;top:324px">(-) Крышка (2)</div>
<div class="doth" style="left:16px;top:350px;width:7px"></div>
<div class="pb" style="left:5px;top:345px"></div>
<svg class="abs" style="left:25px;top:342px" width="16" height="16" viewBox="0 0 16 16">
<path d="M0 3.7 L3.5 0.3 L11 0.3 L16 5.5 L16 12.5 L12.5 16 L0 16Z" fill="#2a8a8a"/>
<path d="M1.2 3.6 L4 1.2 L10.3 1.2 L7.6 3.6Z" fill="#807828"/>
<path d="M12.6 8 L15.2 5.6 L15.2 12.3 L12.6 15Z" fill="#808488"/>
<path d="M1 4.7 L8.5 4.7 L12 8.2 L12 15 L1 15Z" fill="#18f0f8"/>
<path d="M8.7 3.3 L11 1 L15 5.2 L12.6 7.5Z" fill="#18f0f8"/>
<path d="M8.3 3.6 L12.5 7.8" stroke="#2a8a8a" stroke-width="0.9" stroke-dasharray="1 0.9"/>
<circle cx="6.3" cy="10" r="3.9" fill="#609090"/><circle cx="6.3" cy="10.3" r="3.1" fill="#807820"/>
<circle cx="7.3" cy="8.6" r="1.4" fill="#fff"/>
</svg>
<div class="abs tx" style="left:48px;top:344px">(-) Дно (1)</div>
<div class="doth" style="left:16px;top:370px;width:7px"></div>
<div class="pb" style="left:5px;top:365px"></div>
<svg class="abs" style="left:25px;top:362px" width="16" height="16" viewBox="0 0 16 16">
<path d="M0 3.7 L3.5 0.3 L11 0.3 L16 5.5 L16 12.5 L12.5 16 L0 16Z" fill="#2a8a8a"/>
<path d="M1.2 3.6 L4 1.2 L10.3 1.2 L7.6 3.6Z" fill="#807828"/>
<path d="M12.6 8 L15.2 5.6 L15.2 12.3 L12.6 15Z" fill="#808488"/>
<path d="M1 4.7 L8.5 4.7 L12 8.2 L12 15 L1 15Z" fill="#18f0f8"/>
<path d="M8.7 3.3 L11 1 L15 5.2 L12.6 7.5Z" fill="#18f0f8"/>
<path d="M8.3 3.6 L12.5 7.8" stroke="#2a8a8a" stroke-width="0.9" stroke-dasharray="1 0.9"/>
<circle cx="6.3" cy="10" r="3.9" fill="#609090"/><circle cx="6.3" cy="10.3" r="3.1" fill="#807820"/>
<circle cx="7.3" cy="8.6" r="1.4" fill="#fff"/>
</svg>
<div class="abs tx" style="left:48px;top:364px">(-) Дно (2)</div>
<div class="doth" style="left:16px;top:390px;width:7px"></div>
<div class="pb" style="left:5px;top:385px"></div>
<svg class="abs" style="left:25px;top:382px" width="16" height="16" viewBox="0 0 16 16">
<path d="M0 3.7 L3.5 0.3 L11 0.3 L16 5.5 L16 12.5 L12.5 16 L0 16Z" fill="#2a8a8a"/>
<path d="M1.2 3.6 L4 1.2 L10.3 1.2 L7.6 3.6Z" fill="#807828"/>
<path d="M12.6 8 L15.2 5.6 L15.2 12.3 L12.6 15Z" fill="#808488"/>
<path d="M1 4.7 L8.5 4.7 L12 8.2 L12 15 L1 15Z" fill="#18f0f8"/>
<path d="M8.7 3.3 L11 1 L15 5.2 L12.6 7.5Z" fill="#18f0f8"/>
<path d="M8.3 3.6 L12.5 7.8" stroke="#2a8a8a" stroke-width="0.9" stroke-dasharray="1 0.9"/>
<circle cx="6.3" cy="10" r="3.9" fill="#609090"/><circle cx="6.3" cy="10.3" r="3.1" fill="#807820"/>
<circle cx="7.3" cy="8.6" r="1.4" fill="#fff"/>
</svg>
<div class="abs tx" style="left:48px;top:384px">(-) Дно (3)</div>
<div class="doth" style="left:16px;top:410px;width:7px"></div>
<div class="pb" style="left:5px;top:405px"></div>
<svg class="abs" style="left:25px;top:402px" width="16" height="16" viewBox="0 0 16 16">
<path d="M0 3.7 L3.5 0.3 L11 0.3 L16 5.5 L16 12.5 L12.5 16 L0 16Z" fill="#2a8a8a"/>
<path d="M1.2 3.6 L4 1.2 L10.3 1.2 L7.6 3.6Z" fill="#807828"/>
<path d="M12.6 8 L15.2 5.6 L15.2 12.3 L12.6 15Z" fill="#808488"/>
<path d="M1 4.7 L8.5 4.7 L12 8.2 L12 15 L1 15Z" fill="#18f0f8"/>
<path d="M8.7 3.3 L11 1 L15 5.2 L12.6 7.5Z" fill="#18f0f8"/>
<path d="M8.3 3.6 L12.5 7.8" stroke="#2a8a8a" stroke-width="0.9" stroke-dasharray="1 0.9"/>
<circle cx="6.3" cy="10" r="3.9" fill="#609090"/><circle cx="6.3" cy="10.3" r="3.1" fill="#807820"/>
<circle cx="7.3" cy="8.6" r="1.4" fill="#fff"/>
</svg>
<div class="abs tx" style="left:48px;top:404px">(-) Щит (1)</div>
<div class="doth" style="left:16px;top:430px;width:7px"></div>
<div class="pb" style="left:5px;top:425px"></div>
<svg class="abs" style="left:25px;top:422px" width="16" height="16" viewBox="0 0 16 16">
<path d="M0 3.7 L3.5 0.3 L11 0.3 L16 5.5 L16 12.5 L12.5 16 L0 16Z" fill="#2a8a8a"/>
<path d="M1.2 3.6 L4 1.2 L10.3 1.2 L7.6 3.6Z" fill="#807828"/>
<path d="M12.6 8 L15.2 5.6 L15.2 12.3 L12.6 15Z" fill="#808488"/>
<path d="M1 4.7 L8.5 4.7 L12 8.2 L12 15 L1 15Z" fill="#18f0f8"/>
<path d="M8.7 3.3 L11 1 L15 5.2 L12.6 7.5Z" fill="#18f0f8"/>
<path d="M8.3 3.6 L12.5 7.8" stroke="#2a8a8a" stroke-width="0.9" stroke-dasharray="1 0.9"/>
<circle cx="6.3" cy="10" r="3.9" fill="#609090"/><circle cx="6.3" cy="10.3" r="3.1" fill="#807820"/>
<circle cx="7.3" cy="8.6" r="1.4" fill="#fff"/>
</svg>
<div class="abs tx" style="left:48px;top:424px">(-) Щит (2)</div>
<div class="doth" style="left:16px;top:450px;width:7px"></div>
<div class="pb" style="left:5px;top:445px"></div>
<svg class="abs" style="left:25px;top:442px" width="16" height="16" viewBox="0 0 16 16">
<path d="M0 3.7 L3.5 0.3 L11 0.3 L16 5.5 L16 12.5 L12.5 16 L0 16Z" fill="#2a8a8a"/>
<path d="M1.2 3.6 L4 1.2 L10.3 1.2 L7.6 3.6Z" fill="#807828"/>
<path d="M12.6 8 L15.2 5.6 L15.2 12.3 L12.6 15Z" fill="#808488"/>
<path d="M1 4.7 L8.5 4.7 L12 8.2 L12 15 L1 15Z" fill="#18f0f8"/>
<path d="M8.7 3.3 L11 1 L15 5.2 L12.6 7.5Z" fill="#18f0f8"/>
<path d="M8.3 3.6 L12.5 7.8" stroke="#2a8a8a" stroke-width="0.9" stroke-dasharray="1 0.9"/>
<circle cx="6.3" cy="10" r="3.9" fill="#609090"/><circle cx="6.3" cy="10.3" r="3.1" fill="#807820"/>
<circle cx="7.3" cy="8.6" r="1.4" fill="#fff"/>
</svg>
<div class="abs tx" style="left:48px;top:444px">(-) Щит (3)</div>
<div class="doth" style="left:16px;top:470px;width:7px"></div>
<div class="pb" style="left:5px;top:465px"></div>
<svg class="abs" style="left:25px;top:462px" width="16" height="16" viewBox="0 0 16 16">
<path d="M0 3.7 L3.5 0.3 L11 0.3 L16 5.5 L16 12.5 L12.5 16 L0 16Z" fill="#2a8a8a"/>
<path d="M1.2 3.6 L4 1.2 L10.3 1.2 L7.6 3.6Z" fill="#807828"/>
<path d="M12.6 8 L15.2 5.6 L15.2 12.3 L12.6 15Z" fill="#808488"/>
<path d="M1 4.7 L8.5 4.7 L12 8.2 L12 15 L1 15Z" fill="#18f0f8"/>
<path d="M8.7 3.3 L11 1 L15 5.2 L12.6 7.5Z" fill="#18f0f8"/>
<path d="M8.3 3.6 L12.5 7.8" stroke="#2a8a8a" stroke-width="0.9" stroke-dasharray="1 0.9"/>
<circle cx="6.3" cy="10" r="3.9" fill="#609090"/><circle cx="6.3" cy="10.3" r="3.1" fill="#807820"/>
<circle cx="7.3" cy="8.6" r="1.4" fill="#fff"/>
</svg>
<div class="abs tx" style="left:48px;top:464px">(-) Щит угловой (1)</div>
<div class="doth" style="left:16px;top:490px;width:7px"></div>
<div class="pb" style="left:5px;top:485px"></div>
<svg class="abs" style="left:25px;top:482px" width="16" height="16" viewBox="0 0 16 16">
<path d="M0 3.7 L3.5 0.3 L11 0.3 L16 5.5 L16 12.5 L12.5 16 L0 16Z" fill="#2a8a8a"/>
<path d="M1.2 3.6 L4 1.2 L10.3 1.2 L7.6 3.6Z" fill="#807828"/>
<path d="M12.6 8 L15.2 5.6 L15.2 12.3 L12.6 15Z" fill="#808488"/>
<path d="M1 4.7 L8.5 4.7 L12 8.2 L12 15 L1 15Z" fill="#18f0f8"/>
<path d="M8.7 3.3 L11 1 L15 5.2 L12.6 7.5Z" fill="#18f0f8"/>
<path d="M8.3 3.6 L12.5 7.8" stroke="#2a8a8a" stroke-width="0.9" stroke-dasharray="1 0.9"/>
<circle cx="6.3" cy="10" r="3.9" fill="#609090"/><circle cx="6.3" cy="10.3" r="3.1" fill="#807820"/>
<circle cx="7.3" cy="8.6" r="1.4" fill="#fff"/>
</svg>
<div class="abs tx" style="left:48px;top:484px">(-) Щит угловой (2)</div>
<div class="doth" style="left:16px;top:510px;width:7px"></div>
<div class="pb" style="left:5px;top:505px"></div>
<svg class="abs" style="left:25px;top:502px" width="16" height="16" viewBox="0 0 16 16">
<path d="M0 3.7 L3.5 0.3 L11 0.3 L16 5.5 L16 12.5 L12.5 16 L0 16Z" fill="#2a8a8a"/>
<path d="M1.2 3.6 L4 1.2 L10.3 1.2 L7.6 3.6Z" fill="#807828"/>
<path d="M12.6 8 L15.2 5.6 L15.2 12.3 L12.6 15Z" fill="#808488"/>
<path d="M1 4.7 L8.5 4.7 L12 8.2 L12 15 L1 15Z" fill="#18f0f8"/>
<path d="M8.7 3.3 L11 1 L15 5.2 L12.6 7.5Z" fill="#18f0f8"/>
<path d="M8.3 3.6 L12.5 7.8" stroke="#2a8a8a" stroke-width="0.9" stroke-dasharray="1 0.9"/>
<circle cx="6.3" cy="10" r="3.9" fill="#609090"/><circle cx="6.3" cy="10.3" r="3.1" fill="#807820"/>
<circle cx="7.3" cy="8.6" r="1.4" fill="#fff"/>
</svg>
<div class="abs tx" style="left:48px;top:504px">(-) Щит угловой внутренний (1)</div>
<div class="doth" style="left:16px;top:530px;width:7px"></div>
<div class="pb" style="left:5px;top:525px"></div>
<svg class="abs" style="left:25px;top:522px" width="16" height="16" viewBox="0 0 16 16">
<path d="M0 3.7 L3.5 0.3 L11 0.3 L16 5.5 L16 12.5 L12.5 16 L0 16Z" fill="#2a8a8a"/>
<path d="M1.2 3.6 L4 1.2 L10.3 1.2 L7.6 3.6Z" fill="#807828"/>
<path d="M12.6 8 L15.2 5.6 L15.2 12.3 L12.6 15Z" fill="#808488"/>
<path d="M1 4.7 L8.5 4.7 L12 8.2 L12 15 L1 15Z" fill="#18f0f8"/>
<path d="M8.7 3.3 L11 1 L15 5.2 L12.6 7.5Z" fill="#18f0f8"/>
<path d="M8.3 3.6 L12.5 7.8" stroke="#2a8a8a" stroke-width="0.9" stroke-dasharray="1 0.9"/>
<circle cx="6.3" cy="10" r="3.9" fill="#609090"/><circle cx="6.3" cy="10.3" r="3.1" fill="#807820"/>
<circle cx="7.3" cy="8.6" r="1.4" fill="#fff"/>
</svg>
<div class="abs tx" style="left:48px;top:524px">(-) Щит угловой внутренний (2)</div>
<div class="doth" style="left:16px;top:550px;width:7px"></div>
<div class="pb" style="left:5px;top:545px"></div>
<svg class="abs" style="left:25px;top:542px" width="16" height="16" viewBox="0 0 16 16">
<path d="M0 3.7 L3.5 0.3 L11 0.3 L16 5.5 L16 12.5 L12.5 16 L0 16Z" fill="#000090"/>
<path d="M1.2 3.6 L4 1.2 L10.3 1.2 L7.6 3.6Z" fill="#0000b0"/>
<path d="M12.6 8 L15.2 5.6 L15.2 12.3 L12.6 15Z" fill="#000098"/>
<path d="M1 4.7 L8.5 4.7 L12 8.2 L12 15 L1 15Z" fill="#18f0f8"/>
<path d="M8.7 3.3 L11 1 L15 5.2 L12.6 7.5Z" fill="#18f0f8"/>
<path d="M8.3 3.6 L12.5 7.8" stroke="#000090" stroke-width="0.9" stroke-dasharray="1 0.9"/>
<circle cx="6.3" cy="10" r="3.9" fill="#000090"/><circle cx="6.3" cy="10.3" r="3.1" fill="#0000d0"/>
<circle cx="7.3" cy="8.6" r="1.4" fill="#fff"/>
</svg>
<div class="abs tx" style="left:48px;top:544px">(-) Подставка под компьютер (1)</div>
<div class="doth" style="left:16px;top:570px;width:7px"></div>
<div class="pb" style="left:5px;top:565px"></div>
<svg class="abs" style="left:25px;top:562px" width="16" height="16" viewBox="0 0 16 16">
<path d="M0 3.7 L3.5 0.3 L11 0.3 L16 5.5 L16 12.5 L12.5 16 L0 16Z" fill="#000090"/>
<path d="M1.2 3.6 L4 1.2 L10.3 1.2 L7.6 3.6Z" fill="#0000b0"/>
<path d="M12.6 8 L15.2 5.6 L15.2 12.3 L12.6 15Z" fill="#000098"/>
<path d="M1 4.7 L8.5 4.7 L12 8.2 L12 15 L1 15Z" fill="#18f0f8"/>
<path d="M8.7 3.3 L11 1 L15 5.2 L12.6 7.5Z" fill="#18f0f8"/>
<path d="M8.3 3.6 L12.5 7.8" stroke="#000090" stroke-width="0.9" stroke-dasharray="1 0.9"/>
<circle cx="6.3" cy="10" r="3.9" fill="#000090"/><circle cx="6.3" cy="10.3" r="3.1" fill="#0000d0"/>
<circle cx="7.3" cy="8.6" r="1.4" fill="#fff"/>
</svg>
<div class="abs tx" style="left:48px;top:564px">(-) Подставка под компьютер (1)</div>
<div class="doth" style="left:16px;top:590px;width:7px"></div>
<div class="pb" style="left:5px;top:585px"></div>
<svg class="abs" style="left:25px;top:582px" width="16" height="16" viewBox="0 0 16 16">
<path d="M0 3.7 L3.5 0.3 L11 0.3 L16 5.5 L16 12.5 L12.5 16 L0 16Z" fill="#000090"/>
<path d="M1.2 3.6 L4 1.2 L10.3 1.2 L7.6 3.6Z" fill="#0000b0"/>
<path d="M12.6 8 L15.2 5.6 L15.2 12.3 L12.6 15Z" fill="#000098"/>
<path d="M1 4.7 L8.5 4.7 L12 8.2 L12 15 L1 15Z" fill="#18f0f8"/>
<path d="M8.7 3.3 L11 1 L15 5.2 L12.6 7.5Z" fill="#18f0f8"/>
<path d="M8.3 3.6 L12.5 7.8" stroke="#000090" stroke-width="0.9" stroke-dasharray="1 0.9"/>
<circle cx="6.3" cy="10" r="3.9" fill="#000090"/><circle cx="6.3" cy="10.3" r="3.1" fill="#0000d0"/>
<circle cx="7.3" cy="8.6" r="1.4" fill="#fff"/>
</svg>
<div class="abs tx" style="left:48px;top:584px">(-) Подставка под компьютер (1)</div>
<div class="doth" style="left:16px;top:610px;width:7px"></div>
<div class="pb" style="left:5px;top:605px"></div>
<svg class="abs" style="left:25px;top:602px" width="16" height="16" viewBox="0 0 16 16">
<path d="M0 3.7 L3.5 0.3 L11 0.3 L16 5.5 L16 12.5 L12.5 16 L0 16Z" fill="#000090"/>
<path d="M1.2 3.6 L4 1.2 L10.3 1.2 L7.6 3.6Z" fill="#0000b0"/>
<path d="M12.6 8 L15.2 5.6 L15.2 12.3 L12.6 15Z" fill="#000098"/>
<path d="M1 4.7 L8.5 4.7 L12 8.2 L12 15 L1 15Z" fill="#18f0f8"/>
<path d="M8.7 3.3 L11 1 L15 5.2 L12.6 7.5Z" fill="#18f0f8"/>
<path d="M8.3 3.6 L12.5 7.8" stroke="#000090" stroke-width="0.9" stroke-dasharray="1 0.9"/>
<circle cx="6.3" cy="10" r="3.9" fill="#000090"/><circle cx="6.3" cy="10.3" r="3.1" fill="#0000d0"/>
<circle cx="7.3" cy="8.6" r="1.4" fill="#fff"/>
</svg>
<div class="abs tx" style="left:48px;top:604px">(-) Подставка под компьютер (1)</div>
<div class="doth" style="left:16px;top:630px;width:7px"></div>
<div class="pb" style="left:5px;top:625px"></div>
<svg class="abs" style="left:25px;top:622px" width="16" height="16" viewBox="0 0 16 16">
<path d="M0 3.7 L3.5 0.3 L11 0.3 L16 5.5 L16 12.5 L12.5 16 L0 16Z" fill="#000090"/>
<path d="M1.2 3.6 L4 1.2 L10.3 1.2 L7.6 3.6Z" fill="#0000b0"/>
<path d="M12.6 8 L15.2 5.6 L15.2 12.3 L12.6 15Z" fill="#000098"/>
<path d="M1 4.7 L8.5 4.7 L12 8.2 L12 15 L1 15Z" fill="#18f0f8"/>
<path d="M8.7 3.3 L11 1 L15 5.2 L12.6 7.5Z" fill="#18f0f8"/>
<path d="M8.3 3.6 L12.5 7.8" stroke="#000090" stroke-width="0.9" stroke-dasharray="1 0.9"/>
<circle cx="6.3" cy="10" r="3.9" fill="#000090"/><circle cx="6.3" cy="10.3" r="3.1" fill="#0000d0"/>
<circle cx="7.3" cy="8.6" r="1.4" fill="#fff"/>
</svg>
<div class="abs tx" style="left:48px;top:624px">(-) Подставка под компьютер (1)</div>
<div class="doth" style="left:16px;top:650px;width:7px"></div>
<div class="pb" style="left:5px;top:645px"></div>
<svg class="abs" style="left:25px;top:642px" width="16" height="16" viewBox="0 0 16 16">
<path d="M0 3.7 L3.5 0.3 L11 0.3 L16 5.5 L16 12.5 L12.5 16 L0 16Z" fill="#000090"/>
<path d="M1.2 3.6 L4 1.2 L10.3 1.2 L7.6 3.6Z" fill="#0000b0"/>
<path d="M12.6 8 L15.2 5.6 L15.2 12.3 L12.6 15Z" fill="#000098"/>
<path d="M1 4.7 L8.5 4.7 L12 8.2 L12 15 L1 15Z" fill="#18f0f8"/>
<path d="M8.7 3.3 L11 1 L15 5.2 L12.6 7.5Z" fill="#18f0f8"/>
<path d="M8.3 3.6 L12.5 7.8" stroke="#000090" stroke-width="0.9" stroke-dasharray="1 0.9"/>
<circle cx="6.3" cy="10" r="3.9" fill="#000090"/><circle cx="6.3" cy="10.3" r="3.1" fill="#0000d0"/>
<circle cx="7.3" cy="8.6" r="1.4" fill="#fff"/>
</svg>
<div class="abs tx" style="left:48px;top:644px">(-) Подставка под компьютер (1)</div>
<div class="doth" style="left:16px;top:670px;width:7px"></div>
<div class="pb" style="left:5px;top:665px"></div>
<svg class="abs" style="left:25px;top:662px" width="16" height="16" viewBox="0 0 16 16">
<path d="M0 3.7 L3.5 0.3 L11 0.3 L16 5.5 L16 12.5 L12.5 16 L0 16Z" fill="#000090"/>
<path d="M1.2 3.6 L4 1.2 L10.3 1.2 L7.6 3.6Z" fill="#0000b0"/>
<path d="M12.6 8 L15.2 5.6 L15.2 12.3 L12.6 15Z" fill="#000098"/>
<path d="M1 4.7 L8.5 4.7 L12 8.2 L12 15 L1 15Z" fill="#18f0f8"/>
<path d="M8.7 3.3 L11 1 L15 5.2 L12.6 7.5Z" fill="#18f0f8"/>
<path d="M8.3 3.6 L12.5 7.8" stroke="#000090" stroke-width="0.9" stroke-dasharray="1 0.9"/>
<circle cx="6.3" cy="10" r="3.9" fill="#000090"/><circle cx="6.3" cy="10.3" r="3.1" fill="#0000d0"/>
<circle cx="7.3" cy="8.6" r="1.4" fill="#fff"/>
</svg>
<div class="abs tx" style="left:48px;top:664px">(-) Заглушка (1)</div>
<div class="doth" style="left:16px;top:690px;width:7px"></div>
<div class="pb" style="left:5px;top:685px"></div>
<svg class="abs" style="left:25px;top:682px" width="16" height="16" viewBox="0 0 16 16">
<path d="M0 3.7 L3.5 0.3 L11 0.3 L16 5.5 L16 12.5 L12.5 16 L0 16Z" fill="#000090"/>
<path d="M1.2 3.6 L4 1.2 L10.3 1.2 L7.6 3.6Z" fill="#0000b0"/>
<path d="M12.6 8 L15.2 5.6 L15.2 12.3 L12.6 15Z" fill="#000098"/>
<path d="M1 4.7 L8.5 4.7 L12 8.2 L12 15 L1 15Z" fill="#18f0f8"/>
<path d="M8.7 3.3 L11 1 L15 5.2 L12.6 7.5Z" fill="#18f0f8"/>
<path d="M8.3 3.6 L12.5 7.8" stroke="#000090" stroke-width="0.9" stroke-dasharray="1 0.9"/>
<circle cx="6.3" cy="10" r="3.9" fill="#000090"/><circle cx="6.3" cy="10.3" r="3.1" fill="#0000d0"/>
<circle cx="7.3" cy="8.6" r="1.4" fill="#fff"/>
</svg>
<div class="abs tx" style="left:48px;top:684px">(-) Заглушка (2)</div>
<div class="doth" style="left:16px;top:710px;width:7px"></div>
<div class="pb" style="left:5px;top:705px"></div>
<svg class="abs" style="left:25px;top:702px" width="16" height="16" viewBox="0 0 16 16">
<path d="M0 3.7 L3.5 0.3 L11 0.3 L16 5.5 L16 12.5 L12.5 16 L0 16Z" fill="#000090"/>
<path d="M1.2 3.6 L4 1.2 L10.3 1.2 L7.6 3.6Z" fill="#0000b0"/>
<path d="M12.6 8 L15.2 5.6 L15.2 12.3 L12.6 15Z" fill="#000098"/>
<path d="M1 4.7 L8.5 4.7 L12 8.2 L12 15 L1 15Z" fill="#18f0f8"/>
<path d="M8.7 3.3 L11 1 L15 5.2 L12.6 7.5Z" fill="#18f0f8"/>
<path d="M8.3 3.6 L12.5 7.8" stroke="#000090" stroke-width="0.9" stroke-dasharray="1 0.9"/>
<circle cx="6.3" cy="10" r="3.9" fill="#000090"/><circle cx="6.3" cy="10.3" r="3.1" fill="#0000d0"/>
<circle cx="7.3" cy="8.6" r="1.4" fill="#fff"/>
</svg>
<div class="abs tx" style="left:48px;top:704px">(-) Заглушка (3)</div>
<div class="doth" style="left:16px;top:730px;width:7px"></div>
<div class="pb" style="left:5px;top:725px"></div>
<svg class="abs" style="left:25px;top:722px" width="16" height="16" viewBox="0 0 16 16">
<path d="M0 3.7 L3.5 0.3 L11 0.3 L16 5.5 L16 12.5 L12.5 16 L0 16Z" fill="#000090"/>
<path d="M1.2 3.6 L4 1.2 L10.3 1.2 L7.6 3.6Z" fill="#0000b0"/>
<path d="M12.6 8 L15.2 5.6 L15.2 12.3 L12.6 15Z" fill="#000098"/>
<path d="M1 4.7 L8.5 4.7 L12 8.2 L12 15 L1 15Z" fill="#18f0f8"/>
<path d="M8.7 3.3 L11 1 L15 5.2 L12.6 7.5Z" fill="#18f0f8"/>
<path d="M8.3 3.6 L12.5 7.8" stroke="#000090" stroke-width="0.9" stroke-dasharray="1 0.9"/>
<circle cx="6.3" cy="10" r="3.9" fill="#000090"/><circle cx="6.3" cy="10.3" r="3.1" fill="#0000d0"/>
<circle cx="7.3" cy="8.6" r="1.4" fill="#fff"/>
</svg>
<div class="abs tx" style="left:48px;top:724px">(-) Заглушка (4)</div>
<div class="doth" style="left:16px;top:750px;width:7px"></div>
<div class="pb" style="left:5px;top:745px"></div>
<svg class="abs" style="left:25px;top:742px" width="16" height="16" viewBox="0 0 16 16">
<path d="M0 3.7 L3.5 0.3 L11 0.3 L16 5.5 L16 12.5 L12.5 16 L0 16Z" fill="#000090"/>
<path d="M1.2 3.6 L4 1.2 L10.3 1.2 L7.6 3.6Z" fill="#0000b0"/>
<path d="M12.6 8 L15.2 5.6 L15.2 12.3 L12.6 15Z" fill="#000098"/>
<path d="M1 4.7 L8.5 4.7 L12 8.2 L12 15 L1 15Z" fill="#18f0f8"/>
<path d="M8.7 3.3 L11 1 L15 5.2 L12.6 7.5Z" fill="#18f0f8"/>
<path d="M8.3 3.6 L12.5 7.8" stroke="#000090" stroke-width="0.9" stroke-dasharray="1 0.9"/>
<circle cx="6.3" cy="10" r="3.9" fill="#000090"/><circle cx="6.3" cy="10.3" r="3.1" fill="#0000d0"/>
<circle cx="7.3" cy="8.6" r="1.4" fill="#fff"/>
</svg>
<div class="abs tx" style="left:48px;top:744px">(-) Заглушка (5)</div>
<div class="doth" style="left:16px;top:770px;width:7px"></div>
<div class="pb" style="left:5px;top:765px"></div>
<svg class="abs" style="left:25px;top:762px" width="16" height="16" viewBox="0 0 16 16">
<path d="M0 3.7 L3.5 0.3 L11 0.3 L16 5.5 L16 12.5 L12.5 16 L0 16Z" fill="#000090"/>
<path d="M1.2 3.6 L4 1.2 L10.3 1.2 L7.6 3.6Z" fill="#0000b0"/>
<path d="M12.6 8 L15.2 5.6 L15.2 12.3 L12.6 15Z" fill="#000098"/>
<path d="M1 4.7 L8.5 4.7 L12 8.2 L12 15 L1 15Z" fill="#18f0f8"/>
<path d="M8.7 3.3 L11 1 L15 5.2 L12.6 7.5Z" fill="#18f0f8"/>
<path d="M8.3 3.6 L12.5 7.8" stroke="#000090" stroke-width="0.9" stroke-dasharray="1 0.9"/>
<circle cx="6.3" cy="10" r="3.9" fill="#000090"/><circle cx="6.3" cy="10.3" r="3.1" fill="#0000d0"/>
<circle cx="7.3" cy="8.6" r="1.4" fill="#fff"/>
</svg>
<div class="abs tx" style="left:48px;top:764px">(-) Заглушка (6)</div>
<div class="doth" style="left:16px;top:790px;width:7px"></div>
<div class="pb" style="left:5px;top:785px"></div>
<svg class="abs" style="left:25px;top:782px" width="16" height="16" viewBox="0 0 16 16">
<path d="M0 3.7 L3.5 0.3 L11 0.3 L16 5.5 L16 12.5 L12.5 16 L0 16Z" fill="#000090"/>
<path d="M1.2 3.6 L4 1.2 L10.3 1.2 L7.6 3.6Z" fill="#0000b0"/>
<path d="M12.6 8 L15.2 5.6 L15.2 12.3 L12.6 15Z" fill="#000098"/>
<path d="M1 4.7 L8.5 4.7 L12 8.2 L12 15 L1 15Z" fill="#18f0f8"/>
<path d="M8.7 3.3 L11 1 L15 5.2 L12.6 7.5Z" fill="#18f0f8"/>
<path d="M8.3 3.6 L12.5 7.8" stroke="#000090" stroke-width="0.9" stroke-dasharray="1 0.9"/>
<circle cx="6.3" cy="10" r="3.9" fill="#000090"/><circle cx="6.3" cy="10.3" r="3.1" fill="#0000d0"/>
<circle cx="7.3" cy="8.6" r="1.4" fill="#fff"/>
</svg>
<div class="abs tx" style="left:48px;top:784px">(-) Заглушка (1)</div>
<div class="doth" style="left:16px;top:810px;width:7px"></div>
<div class="pb" style="left:5px;top:805px"></div>
<svg class="abs" style="left:25px;top:802px" width="16" height="16" viewBox="0 0 16 16">
<path d="M0 3.7 L3.5 0.3 L11 0.3 L16 5.5 L16 12.5 L12.5 16 L0 16Z" fill="#000090"/>
<path d="M1.2 3.6 L4 1.2 L10.3 1.2 L7.6 3.6Z" fill="#0000b0"/>
<path d="M12.6 8 L15.2 5.6 L15.2 12.3 L12.6 15Z" fill="#000098"/>
<path d="M1 4.7 L8.5 4.7 L12 8.2 L12 15 L1 15Z" fill="#18f0f8"/>
<path d="M8.7 3.3 L11 1 L15 5.2 L12.6 7.5Z" fill="#18f0f8"/>
<path d="M8.3 3.6 L12.5 7.8" stroke="#000090" stroke-width="0.9" stroke-dasharray="1 0.9"/>
<circle cx="6.3" cy="10" r="3.9" fill="#000090"/><circle cx="6.3" cy="10.3" r="3.1" fill="#0000d0"/>
<circle cx="7.3" cy="8.6" r="1.4" fill="#fff"/>
</svg>
<div class="abs tx" style="left:48px;top:804px">(-) Заглушка (2)</div>
<div class="doth" style="left:16px;top:830px;width:7px"></div>
<div class="pb" style="left:5px;top:825px"></div>
<svg class="abs" style="left:25px;top:822px" width="16" height="16" viewBox="0 0 16 16">
<path d="M0 3.7 L3.5 0.3 L11 0.3 L16 5.5 L16 12.5 L12.5 16 L0 16Z" fill="#000090"/>
<path d="M1.2 3.6 L4 1.2 L10.3 1.2 L7.6 3.6Z" fill="#0000b0"/>
<path d="M12.6 8 L15.2 5.6 L15.2 12.3 L12.6 15Z" fill="#000098"/>
<path d="M1 4.7 L8.5 4.7 L12 8.2 L12 15 L1 15Z" fill="#18f0f8"/>
<path d="M8.7 3.3 L11 1 L15 5.2 L12.6 7.5Z" fill="#18f0f8"/>
<path d="M8.3 3.6 L12.5 7.8" stroke="#000090" stroke-width="0.9" stroke-dasharray="1 0.9"/>
<circle cx="6.3" cy="10" r="3.9" fill="#000090"/><circle cx="6.3" cy="10.3" r="3.1" fill="#0000d0"/>
<circle cx="7.3" cy="8.6" r="1.4" fill="#fff"/>
</svg>
<div class="abs tx" style="left:48px;top:824px">(-) Заглушка (3)</div>
</div>
<div id="vs" class="abs"></div>
<div class="abs" style="left:197px;top:72px;width:2px;height:852px;background:#9cb2cc"></div>
<div class="abs" style="left:201px;top:72px;width:1px;height:852px;background:#90acd8"></div>
<div class="abs sbtn" style="left:183px;top:77px;width:13px;height:14px"><svg class="abs" style="left:2px;top:3px" width="9" height="6"><path d="M0.5 5 L4.5 1 L8.5 5" fill="none" stroke="#4d6185" stroke-width="1.8"/></svg></div>
<div class="abs sbtn" style="left:183px;top:93px;width:13px;height:491px;background:linear-gradient(90deg,#c8d6f8,#c2d4fc 50%,#b4c8f2)"><div class="abs" style="left:3px;top:241px;width:7px;height:8px;background:repeating-linear-gradient(#eef4fe 0 1px,#8ea6d8 1px 2px)"></div></div>
<div class="abs sbtn" style="left:183px;top:885px;width:13px;height:15px"><svg class="abs" style="left:2px;top:4px" width="9" height="6"><path d="M0.5 1 L4.5 5 L8.5 1" fill="none" stroke="#4d6185" stroke-width="1.8"/></svg></div>
<div id="hs" class="abs"></div>
<div class="abs sbtn" style="left:7px;top:902px;width:14px;height:14px"><svg class="abs" style="left:3px;top:2px" width="6" height="9"><path d="M5 0.5 L1 4.5 L5 8.5" fill="none" stroke="#4d6185" stroke-width="1.8"/></svg></div>
<div class="abs sbtn" style="left:24px;top:902px;width:103px;height:14px;background:linear-gradient(#c8d6f8,#c2d4fc 50%,#b4c8f2)"><div class="abs" style="left:47px;top:4px;width:8px;height:6px;background:repeating-linear-gradient(90deg,#eef4fe 0 1px,#8ea6d8 1px 2px)"></div></div>
<div class="abs sbtn" style="left:165px;top:902px;width:14px;height:14px"><svg class="abs" style="left:4px;top:2px" width="6" height="9"><path d="M1 0.5 L5 4.5 L1 8.5" fill="none" stroke="#4d6185" stroke-width="1.8"/></svg></div>
<div class="abs" style="left:181px;top:901px;width:16px;height:17px;background:#f0eee0"></div>
<div class="abs" style="left:2px;top:918px;width:199px;height:5px;background:#b0d4f8"></div>
<div class="abs" style="left:2px;top:923px;width:200px;height:1px;background:#3c5a9a"></div>
<div id="tabbar" class="abs"></div>
<div id="tab" class="abs"><div class="abs" style="left:4px;top:5px">Построение</div></div>
<svg class="abs" style="left:172px;top:930px" width="24" height="10"><path d="M6.5 0.5 L1.5 4.5 L6.5 8.5Z M17.5 0.5 L22.5 4.5 L17.5 8.5Z" fill="none" stroke="#8a9a40" stroke-width="1"/></svg>
<div id="bot" class="abs"></div>
<div class="abs" style="left:0;top:948px;width:1280px;height:7px;background:linear-gradient(#f2f6fd 0px,#f2f6fd 1px,#c6d8f5 2px,#c8daf6 6px,#d4e2f8 7px)"></div>
<div class="abs" style="left:1px;top:955px;width:3px;height:47px;background:repeating-linear-gradient(#1c3a6a 0 2px,#f4f8ff 2px 3px,transparent 3px 4px)"></div>
<div class="abs" style="left:6px;top:956px;width:1268px;height:31px;border:1px solid #6e8cc4;border-bottom-color:#1c3a6a;background:linear-gradient(#eaf0fc 0%,#dce6fa 20%,#b4caf0 60%,#8aaee6 100%)"><div class="abs" style="left:0;top:0;width:3px;height:29px;background:#e8eefa"></div></div>
<svg class="abs" style="left:12px;top:990px" width="24" height="10"><path d="M2 4.5 L6 1 L6 8Z M28 0" fill="#000"/><path d="M16 1 L20 4.5 L16 8Z" fill="#000"/></svg>
<div class="abs" style="left:0;top:1003px;width:1280px;height:3px;background:#e2eaf8"></div>
<div class="abs" style="left:206px;top:947px;width:1073px;height:1px;background:#efede4"></div><div class="abs" style="left:1278px;top:52px;width:1px;height:896px;background:#efede4"></div>
<div id="status" class="abs"><div class="abs" style="left:4px;top:2px;width:1190px;height:17px;border-top:1px solid #a0a090;border-left:1px solid #a0a090;border-right:1px solid #a0a090"></div><div class="abs" style="left:5px;top:4px;letter-spacing:0.06px">Щелкните левой кнопкой мыши на объекте для его выделения (вместе с Ctrl - добавить к выделенным)</div><div class="abs" style="left:1196px;top:2px;width:84px;height:17px;border-top:1px solid #a0a090;border-left:1px solid #a0a090"></div></div>
<div id="taskb" class="abs"></div>
</body></html>
